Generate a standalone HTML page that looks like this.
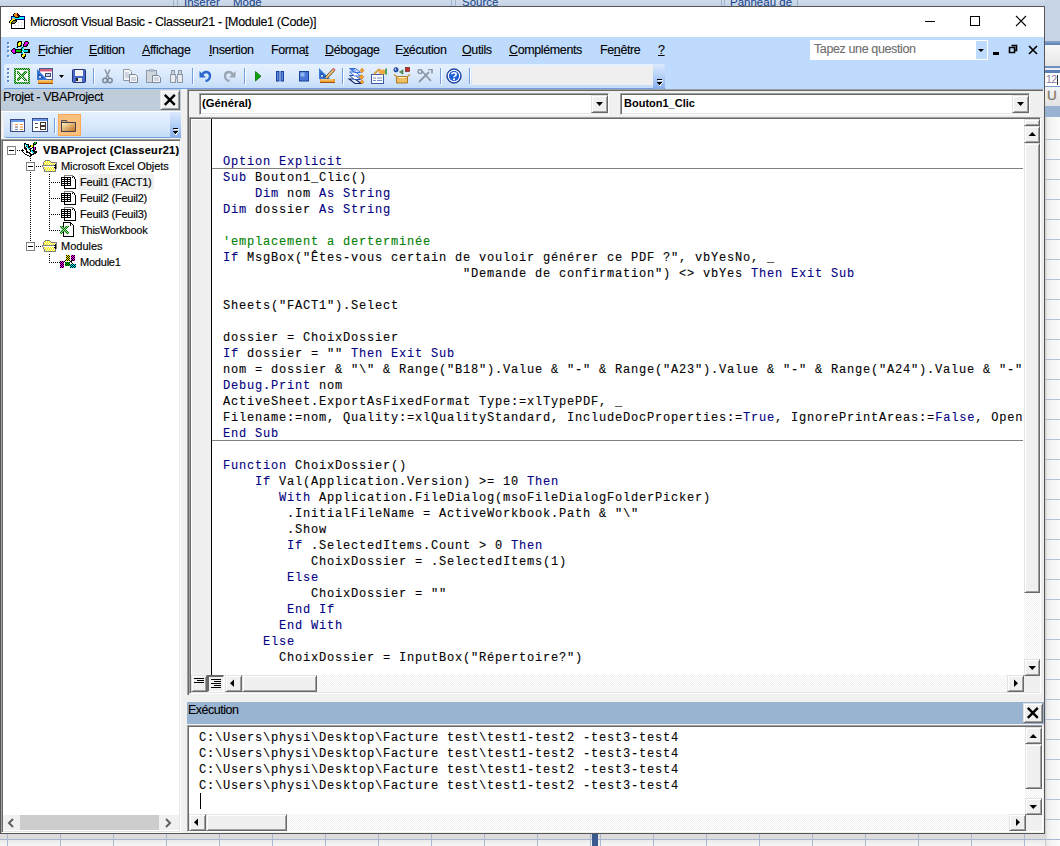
<!DOCTYPE html>
<html><head><meta charset="utf-8">
<style>
*{box-sizing:border-box}
html,body{margin:0;padding:0}
body{width:1060px;height:846px;position:relative;overflow:hidden;background:#dfe3e8;font-family:"Liberation Sans",sans-serif;font-size:12px;color:#000}
.a{position:absolute}
.mi{position:absolute;top:42px;font-size:12.5px;letter-spacing:-0.38px;color:#000;white-space:nowrap;line-height:16px;-webkit-text-stroke:0.1px #000}
.mi u{text-decoration:underline;text-underline-offset:1px}
.ui{position:absolute;font-size:12.5px;letter-spacing:-0.38px;white-space:nowrap;line-height:16px;-webkit-text-stroke:0.1px currentColor}
.code{position:absolute;font-family:"Liberation Mono",monospace;font-size:12px;letter-spacing:0.8px;-webkit-text-stroke:0.1px currentColor;white-space:pre;line-height:16px;color:#000}
.k{color:#00007f}
.c{color:#007f00}
.tree{position:absolute;font-size:11px;white-space:nowrap;line-height:16px;-webkit-text-stroke:0.15px #000}
.btn3d{position:absolute;background:#f0f0f0;border:1px solid;border-color:#e3e3e3 #696969 #696969 #e3e3e3;box-shadow:inset 1px 1px 0 #fff,inset -1px -1px 0 #a0a0a0}
.sunk{position:absolute;border:1px solid;border-color:#a0a0a0 #fff #fff #a0a0a0;box-shadow:inset 1px 1px 0 #696969,inset -1px -1px 0 #e3e3e3}
.sep{position:absolute;width:1px;background:#6f9ddd;border-right:1px solid #fff}
</style></head><body>
<!-- ===== background (Excel behind) ===== -->
<div class="a" style="left:0;top:0;width:1060px;height:6px;background:linear-gradient(#d0dceb,#c3d2e4)"></div>
<div class="a" style="left:173px;top:0;width:1px;height:6px;background:#9fb3cf"></div><div class="a" style="left:177px;top:0;width:1px;height:6px;background:#9fb3cf"></div>
<div class="a" style="left:451px;top:0;width:1px;height:6px;background:#9fb3cf"></div><div class="a" style="left:455px;top:0;width:1px;height:6px;background:#9fb3cf"></div>
<div class="a" style="left:721px;top:0;width:1px;height:6px;background:#9fb3cf"></div><div class="a" style="left:724px;top:0;width:1px;height:6px;background:#9fb3cf"></div><div class="a" style="left:797px;top:0;width:1px;height:6px;background:#9fb3cf"></div>
<div class="a" style="left:0;top:0;width:1060px;height:6px;overflow:hidden">
<div class="a" style="left:184px;top:-4px;font-size:11.5px;line-height:13px;color:#15428b;white-space:nowrap">Insérer</div>
<div class="a" style="left:233px;top:-4px;font-size:11.5px;line-height:13px;color:#15428b;white-space:nowrap">Mode</div>
<div class="a" style="left:462px;top:-4px;font-size:11.5px;line-height:13px;color:#15428b;white-space:nowrap">Source</div>
<div class="a" style="left:730px;top:-4px;font-size:11.5px;line-height:13px;color:#15428b;white-space:nowrap">Panneau de</div>
</div>
<!-- right strip -->
<div class="a" style="left:1045px;top:0;width:15px;height:846px;background:linear-gradient(90deg,#c8c8c8,#ececec 2px,#f4f4f4 6px,#fbfbfb)"></div>
<div class="a" style="left:1045px;top:0;width:15px;height:41px;background:#c6d4e5"></div>
<div class="a" style="left:1045px;top:41px;width:15px;height:4px;background:linear-gradient(#8aa6cc,#5a7fb4)"></div>
<div class="a" style="left:1045px;top:45px;width:15px;height:21px;background:linear-gradient(#f8f8f8,#e6e6e6)"></div>
<div class="a" style="left:1045px;top:66px;width:15px;height:2px;background:#6f90c0"></div>
<div class="a" style="left:1045px;top:68px;width:15px;height:2px;background:#e8eef6"></div>
<div class="a" style="left:1045px;top:70px;width:15px;height:3px;background:#5f80b4"></div>
<div class="a" style="left:1045px;top:73px;width:15px;height:13px;background:#fff"></div>
<div class="a" style="left:1046px;top:73px;font-size:10.5px;line-height:13px;color:#8a7a9a;white-space:nowrap;letter-spacing:-0.5px">12</div>
<div class="a" style="left:1057px;top:75px;width:1px;height:10px;background:#333"></div>
<div class="a" style="left:1045px;top:86px;width:15px;height:1px;background:#7a9ccc"></div>
<div class="a" style="left:1045px;top:87px;width:15px;height:19px;background:linear-gradient(#f4f4f4,#e2e2e2)"></div>
<div class="a" style="left:1047px;top:88px;font-size:13.5px;line-height:16px;color:#b08040;white-space:nowrap;-webkit-text-stroke:0.3px #3a6aa0">U</div>
<div class="a" style="left:1045px;top:106px;width:15px;height:11px;background:#9ab2d2"></div>
<div class="a" style="left:1045px;top:139px;width:15px;height:1px;background:#b4c2d8"></div><div class="a" style="left:1045px;top:159px;width:15px;height:1px;background:#b4c2d8"></div><div class="a" style="left:1045px;top:179px;width:15px;height:1px;background:#b4c2d8"></div><div class="a" style="left:1045px;top:199px;width:15px;height:1px;background:#b4c2d8"></div><div class="a" style="left:1045px;top:219px;width:15px;height:1px;background:#b4c2d8"></div><div class="a" style="left:1045px;top:239px;width:15px;height:1px;background:#b4c2d8"></div><div class="a" style="left:1045px;top:259px;width:15px;height:1px;background:#b4c2d8"></div><div class="a" style="left:1045px;top:279px;width:15px;height:1px;background:#b4c2d8"></div><div class="a" style="left:1045px;top:299px;width:15px;height:1px;background:#b4c2d8"></div><div class="a" style="left:1045px;top:319px;width:15px;height:1px;background:#b4c2d8"></div><div class="a" style="left:1045px;top:339px;width:15px;height:1px;background:#b4c2d8"></div><div class="a" style="left:1045px;top:359px;width:15px;height:1px;background:#b4c2d8"></div><div class="a" style="left:1045px;top:379px;width:15px;height:1px;background:#b4c2d8"></div><div class="a" style="left:1045px;top:399px;width:15px;height:1px;background:#b4c2d8"></div><div class="a" style="left:1045px;top:419px;width:15px;height:1px;background:#b4c2d8"></div><div class="a" style="left:1045px;top:439px;width:15px;height:1px;background:#b4c2d8"></div><div class="a" style="left:1045px;top:459px;width:15px;height:1px;background:#b4c2d8"></div><div class="a" style="left:1045px;top:479px;width:15px;height:1px;background:#b4c2d8"></div><div class="a" style="left:1045px;top:499px;width:15px;height:1px;background:#b4c2d8"></div><div class="a" style="left:1045px;top:519px;width:15px;height:1px;background:#b4c2d8"></div><div class="a" style="left:1045px;top:539px;width:15px;height:1px;background:#b4c2d8"></div><div class="a" style="left:1045px;top:559px;width:15px;height:1px;background:#b4c2d8"></div><div class="a" style="left:1045px;top:579px;width:15px;height:1px;background:#b4c2d8"></div><div class="a" style="left:1045px;top:599px;width:15px;height:1px;background:#b4c2d8"></div><div class="a" style="left:1045px;top:619px;width:15px;height:1px;background:#b4c2d8"></div><div class="a" style="left:1045px;top:639px;width:15px;height:1px;background:#b4c2d8"></div><div class="a" style="left:1045px;top:659px;width:15px;height:1px;background:#b4c2d8"></div><div class="a" style="left:1045px;top:679px;width:15px;height:1px;background:#b4c2d8"></div><div class="a" style="left:1045px;top:699px;width:15px;height:1px;background:#b4c2d8"></div><div class="a" style="left:1045px;top:719px;width:15px;height:1px;background:#b4c2d8"></div><div class="a" style="left:1045px;top:739px;width:15px;height:1px;background:#b4c2d8"></div><div class="a" style="left:1045px;top:759px;width:15px;height:1px;background:#b4c2d8"></div><div class="a" style="left:1045px;top:779px;width:15px;height:1px;background:#b4c2d8"></div><div class="a" style="left:1045px;top:799px;width:15px;height:1px;background:#b4c2d8"></div><div class="a" style="left:1045px;top:819px;width:15px;height:1px;background:#b4c2d8"></div><div class="a" style="left:1045px;top:839px;width:15px;height:1px;background:#b4c2d8"></div>
<!-- bottom strip -->
<div class="a" style="left:0;top:834px;width:1045px;height:5px;background:#dcdcdc"></div>
<div class="a" style="left:0;top:839px;width:1060px;height:1px;background:#a9b8cf"></div>
<div class="a" style="left:0;top:840px;width:1045px;height:6px;background:linear-gradient(#e9e9e9,#f6f6f6)"></div>
<div class="a" style="left:7px;top:834px;width:1px;height:12px;background:#a9b8cf"></div><div class="a" style="left:60px;top:834px;width:1px;height:12px;background:#a9b8cf"></div><div class="a" style="left:113px;top:834px;width:1px;height:12px;background:#a9b8cf"></div><div class="a" style="left:166px;top:834px;width:1px;height:12px;background:#a9b8cf"></div><div class="a" style="left:219px;top:834px;width:1px;height:12px;background:#a9b8cf"></div><div class="a" style="left:272px;top:834px;width:1px;height:12px;background:#a9b8cf"></div><div class="a" style="left:325px;top:834px;width:1px;height:12px;background:#a9b8cf"></div><div class="a" style="left:378px;top:834px;width:1px;height:12px;background:#a9b8cf"></div><div class="a" style="left:431px;top:834px;width:1px;height:12px;background:#a9b8cf"></div><div class="a" style="left:484px;top:834px;width:1px;height:12px;background:#a9b8cf"></div><div class="a" style="left:537px;top:834px;width:1px;height:12px;background:#a9b8cf"></div><div class="a" style="left:590px;top:834px;width:1px;height:12px;background:#a9b8cf"></div><div class="a" style="left:600px;top:834px;width:1px;height:12px;background:#a9b8cf"></div><div class="a" style="left:653px;top:834px;width:1px;height:12px;background:#a9b8cf"></div><div class="a" style="left:706px;top:834px;width:1px;height:12px;background:#a9b8cf"></div><div class="a" style="left:759px;top:834px;width:1px;height:12px;background:#a9b8cf"></div><div class="a" style="left:812px;top:834px;width:1px;height:12px;background:#a9b8cf"></div><div class="a" style="left:865px;top:834px;width:1px;height:12px;background:#a9b8cf"></div><div class="a" style="left:918px;top:834px;width:1px;height:12px;background:#a9b8cf"></div><div class="a" style="left:971px;top:834px;width:1px;height:12px;background:#a9b8cf"></div><div class="a" style="left:1024px;top:834px;width:1px;height:12px;background:#a9b8cf"></div>
<div class="a" style="left:592px;top:834px;width:6px;height:12px;background:#3a5a90"></div>
<!-- ===== window ===== -->
<div class="a" style="left:0;top:6px;width:1045px;height:828px;border:1px solid #555;background:#f0f0f0"></div>
<!-- title bar -->
<div class="a" style="left:1px;top:7px;width:1043px;height:30px;background:#fff"></div>
<div class="ui" style="left:30px;top:14px;letter-spacing:-0.33px">Microsoft Visual Basic - Classeur21 - [Module1 (Code)]</div>
<!-- min max close -->
<div class="a" style="left:925px;top:21px;width:10px;height:1px;background:#000"></div>
<div class="a" style="left:970px;top:16px;width:10px;height:10px;border:1px solid #000"></div>
<svg class="a" style="left:1015px;top:15px" width="12" height="12"><path d="M1 1L11 11M11 1L1 11" stroke="#000" stroke-width="1.1"/></svg>

<!-- menu + toolbar band -->
<div class="a" style="left:1px;top:37px;width:1043px;height:52px;background:#bedbfe"></div>
<div class="mi" style="left:38px"><u>F</u>ichier</div>
<div class="mi" style="left:89px"><u>E</u>dition</div>
<div class="mi" style="left:142px"><u>A</u>ffichage</div>
<div class="mi" style="left:209px"><u>I</u>nsertion</div>
<div class="mi" style="left:271px">Forma<u>t</u></div>
<div class="mi" style="left:325px"><u>D</u>ébogage</div>
<div class="mi" style="left:395px">E<u>x</u>écution</div>
<div class="mi" style="left:462px"><u>O</u>utils</div>
<div class="mi" style="left:509px"><u>C</u>ompléments</div>
<div class="mi" style="left:600px">Fe<u>n</u>être</div>
<div class="mi" style="left:658px"><u>?</u></div>

<!-- question box -->
<div class="a" style="left:810px;top:40px;width:178px;height:20px;background:#fff;border:1px solid #fff"></div>
<div class="a" style="left:976px;top:41px;width:11px;height:18px;background:#bedbfe"></div>
<div class="ui" style="left:814px;top:41px;color:#6d6d6d">Tapez une question</div>
<svg class="a" style="left:978px;top:49px" width="7" height="4"><path d="M0 0H6L3 3Z" fill="#000"/></svg>
<div class="a" style="left:993px;top:52px;width:6px;height:3px;background:#000"></div>
<svg class="a" style="left:1008px;top:44px" width="10" height="10"><path d="M3.5 1.5h5v5h-2M1.5 3.5h5v5h-5z" stroke="#000" stroke-width="1.6" fill="none"/></svg>
<svg class="a" style="left:1028px;top:45px" width="10" height="10"><path d="M1 1L9 9M9 1L1 9" stroke="#000" stroke-width="1.7"/></svg>

<!-- toolbar band -->
<div class="a" style="left:4px;top:64px;width:661px;height:25px;border-radius:3px 3px 0 0;background:linear-gradient(#e6f1fe,#d8e8fc 55%,#c4dcf8);border-bottom:1px solid #6d9ee0"></div>
<div class="a" style="left:472px;top:66px;width:181px;height:19px;background:#efefef"></div>
<div class="a" style="left:653px;top:64px;width:12px;height:25px;border-radius:0 3px 3px 0;background:linear-gradient(#dce9fd,#b4d0f8 50%,#86ace8)"></div>
<svg class="a" style="left:657px;top:79px" width="7" height="8" shape-rendering="crispEdges"><rect x="1" y="1" width="5" height="1" fill="#fff"/><rect x="5" y="3" width="1" height="1" fill="#fff"/><rect x="4" y="4" width="1" height="1" fill="#fff"/><rect x="3" y="5" width="1" height="1" fill="#fff"/><rect x="2" y="6" width="2" height="1" fill="#fff"/><rect x="0" y="0" width="5" height="1" fill="#000"/><rect x="0" y="3" width="5" height="1" fill="#000"/><rect x="1" y="4" width="3" height="1" fill="#000"/><rect x="2" y="5" width="1" height="1" fill="#000"/></svg>

<!-- ===== project panel ===== -->
<div class="a" style="left:1px;top:89px;width:180px;height:22px;background:#bfcddb"></div>
<div class="ui" style="left:3px;top:89px;letter-spacing:-0.4px">Projet - VBAProject</div>
<div class="btn3d" style="left:160px;top:90px;width:20px;height:20px"></div>
<svg class="a" style="left:163px;top:93px" width="14" height="13"><path d="M1.8 1.8L11.8 11.8M11.8 1.8L1.8 11.8" stroke="#000" stroke-width="2.4"/></svg>
<div class="a" style="left:1px;top:111px;width:180px;height:1px;background:#fff"></div>
<div class="a" style="left:4px;top:112px;width:177px;height:26px;border-radius:3px 0 0 3px;background:linear-gradient(#e6f1fe,#d8e8fc 55%,#c4dcf8);border-bottom:1px solid #6d9ee0"></div>
<div class="a" style="left:170px;top:112px;width:11px;height:26px;border-radius:0 0 3px 0;background:linear-gradient(#dce9fd,#b4d0f8 50%,#86ace8)"></div>
<svg class="a" style="left:173px;top:128px" width="7" height="8" shape-rendering="crispEdges"><rect x="1" y="1" width="5" height="1" fill="#fff"/><rect x="5" y="3" width="1" height="1" fill="#fff"/><rect x="4" y="4" width="1" height="1" fill="#fff"/><rect x="3" y="5" width="1" height="1" fill="#fff"/><rect x="2" y="6" width="2" height="1" fill="#fff"/><rect x="0" y="0" width="5" height="1" fill="#000"/><rect x="0" y="3" width="5" height="1" fill="#000"/><rect x="1" y="4" width="3" height="1" fill="#000"/><rect x="2" y="5" width="1" height="1" fill="#000"/></svg>
<div class="a" style="left:58px;top:114px;width:23px;height:22px;background:#fdbf7c;border:1px solid #f9a955"></div>

<!-- tree pane -->
<div class="sunk" style="left:1px;top:139px;width:180px;height:694px;background:#fff"></div>
<div class="a" style="left:3px;top:815px;width:176px;height:15px;background:#f0f0f0"></div>
<div class="a" style="left:20px;top:815px;width:139px;height:15px;background:#cdcdcd"></div>
<svg class="a" style="left:7px;top:818px" width="10" height="10"><path d="M6 1L2 5L6 9" stroke="#606060" stroke-width="2" fill="none"/></svg>
<svg class="a" style="left:163px;top:818px" width="10" height="10"><path d="M3 1L7 5L3 9" stroke="#606060" stroke-width="2" fill="none"/></svg>


<!-- tree content -->
<div class="a" style="left:79px;top:174px;width:75px;height:16px;background:#f0f0f0"></div>
<svg class="a" style="left:0;top:140px" width="180" height="140">
<g fill="#fff" stroke="#808080" stroke-width="1">
<rect x="7.5" y="6.5" width="8" height="8"/>
<rect x="26.5" y="22.5" width="8" height="8"/>
<rect x="26.5" y="102.5" width="8" height="8"/>
</g>
<g stroke="#000" stroke-width="1">
<path d="M9 10.5h5M28 26.5h5M28 106.5h5"/>
</g>
<g stroke="#000" stroke-width="1" stroke-dasharray="1 1">
<path d="M17 10.5h5M36 26.5h5M36 106.5h5"/>
<path d="M30.5 18v4M30.5 32v70"/>
<path d="M49.5 34v58M49.5 114v9"/>
<path d="M51 42.5h9M51 58.5h9M51 74.5h9M51 90.5h9M51 122.5h9"/>
</g>
</svg>
<div class="tree" style="left:43px;top:142px;font-weight:bold;width:136px;overflow:hidden;letter-spacing:0.3px">VBAProject (Classeur21)</div>
<div class="tree" style="left:61px;top:158px;letter-spacing:-0.08px">Microsoft Excel Objets</div>
<div class="tree" style="left:81px;top:174px;left:80px;letter-spacing:-0.22px">Feuil1 (FACT1)</div>
<div class="tree" style="left:81px;top:190px;left:80px;letter-spacing:-0.22px">Feuil2 (Feuil2)</div>
<div class="tree" style="left:81px;top:206px;left:80px;letter-spacing:-0.22px">Feuil3 (Feuil3)</div>
<div class="tree" style="left:81px;top:222px;left:80px;letter-spacing:-0.22px">ThisWorkbook</div>
<div class="tree" style="left:61px;top:238px">Modules</div>
<div class="tree" style="left:81px;top:254px;left:80px;letter-spacing:-0.22px">Module1</div>
<!-- ===== code window ===== -->
<div class="a" style="left:187px;top:89px;width:856px;height:606px;border-style:solid;border-width:1px 0 0 1px;border-color:#a0a0a0;box-shadow:inset 1px 1px 0 #696969"></div>
<!-- combos -->
<div class="sunk" style="left:199px;top:93px;width:410px;height:22px;background:#fff"></div>
<div class="btn3d" style="left:591px;top:95px;width:17px;height:18px"></div>
<svg class="a" style="left:596px;top:102px" width="8" height="5"><path d="M0 0H7L3.5 4Z" fill="#000"/></svg>
<div class="a" style="left:202px;top:96px;font-size:11.3px;font-weight:bold;white-space:nowrap;line-height:14px">(Général)</div>
<div class="sunk" style="left:620px;top:93px;width:410px;height:22px;background:#fff"></div>
<div class="btn3d" style="left:1012px;top:95px;width:17px;height:18px"></div>
<svg class="a" style="left:1017px;top:102px" width="8" height="5"><path d="M0 0H7L3.5 4Z" fill="#000"/></svg>
<div class="a" style="left:624px;top:96px;font-size:11px;font-weight:bold;white-space:nowrap;line-height:14px">Bouton1_Clic</div>

<!-- code pane -->
<div class="sunk" style="left:189px;top:117px;width:852px;height:577px;background:#fff"></div>
<div class="a" style="left:191px;top:119px;width:20px;height:556px;background:#f0f0f0;border-left:1px solid #fff;border-top:1px solid #fff"></div>
<div class="a" style="left:211px;top:119px;width:1px;height:556px;background:#000"></div>
<div class="a" style="left:212px;top:168px;width:811px;height:1px;background:#808080"></div>
<div class="a" style="left:212px;top:440px;width:811px;height:1px;background:#808080"></div>

<!-- code text -->
<div class="a" style="left:212px;top:119px;width:811px;height:556px;overflow:hidden"><div class="code" style="left:11px;top:3px">

<span class="k">Option Explicit</span>
<span class="k">Sub</span> Bouton1_Clic()
    <span class="k">Dim</span> nom <span class="k">As String</span>
<span class="k">Dim</span> dossier <span class="k">As String</span>

<span class="c">'emplacement a derterminée</span>
<span class="k">If</span> MsgBox("Êtes-vous certain de vouloir générer ce PDF ?", vbYesNo, _
                              "Demande de confirmation") &lt;&gt; vbYes <span class="k">Then Exit Sub</span>

Sheets("FACT1").Select

dossier = ChoixDossier
<span class="k">If</span> dossier = "" <span class="k">Then Exit Sub</span>
nom = dossier &amp; "\" &amp; Range("B18").Value &amp; "-" &amp; Range("A23").Value &amp; "-" &amp; Range("A24").Value &amp; "-" &amp; Range("A25").Value
<span class="k">Debug.Print</span> nom
ActiveSheet.ExportAsFixedFormat Type:=xlTypePDF, _
Filename:=nom, Quality:=xlQualityStandard, IncludeDocProperties:=<span class="k">True</span>, IgnorePrintAreas:=<span class="k">False</span>, OpenAfterPublish:=<span class="k">True</span>
<span class="k">End Sub</span>

<span class="k">Function</span> ChoixDossier()
    <span class="k">If</span> Val(Application.Version) &gt;= 10 <span class="k">Then</span>
       <span class="k">With</span> Application.FileDialog(msoFileDialogFolderPicker)
        .InitialFileName = ActiveWorkbook.Path &amp; "\"
        .Show
        <span class="k">If</span> .SelectedItems.Count &gt; 0 <span class="k">Then</span>
           ChoixDossier = .SelectedItems(1)
        <span class="k">Else</span>
           ChoixDossier = ""
        <span class="k">End If</span>
       <span class="k">End With</span>
     <span class="k">Else</span>
       ChoixDossier = InputBox("Répertoire?")</div></div>
<!-- vscroll -->
<div class="a" style="left:1024px;top:119px;width:16px;height:556px;background:repeating-conic-gradient(#f0f0f0 0 25%,#fff 0 50%) 0 0/2px 2px"></div>
<div class="btn3d" style="left:1024px;top:119px;width:16px;height:7px"></div>
<div class="btn3d" style="left:1024px;top:126px;width:16px;height:17px"></div>
<svg class="a" style="left:1028px;top:131px" width="9" height="6"><path d="M0.5 5H8L4.25 1Z" fill="#000"/></svg>
<div class="btn3d" style="left:1024px;top:143px;width:16px;height:450px"></div>
<div class="btn3d" style="left:1024px;top:659px;width:16px;height:17px"></div>
<svg class="a" style="left:1028px;top:665px" width="9" height="6"><path d="M0.5 1H8L4.25 5Z" fill="#000"/></svg>
<!-- hscroll -->
<div class="a" style="left:191px;top:675px;width:832px;height:17px;background:repeating-conic-gradient(#f0f0f0 0 25%,#fff 0 50%) 0 0/2px 2px"></div>
<div class="btn3d" style="left:191px;top:675px;width:16px;height:17px"></div>
<div class="a" style="left:207px;top:675px;width:17px;height:17px;background:#f0f0f0;border-style:solid;border-width:2px 1px 1px 2px;border-color:#696969 #fff #fff #696969"></div>
<svg class="a" style="left:193px;top:677px" width="13" height="13" shape-rendering="crispEdges"><path d="M1 1.5h10M4 3.5h7M1 5.5h10" stroke="#000" stroke-width="1"/></svg>
<svg class="a" style="left:210px;top:678px" width="13" height="12" shape-rendering="crispEdges"><path d="M1 1.5h10M4 3.5h7M1 5.5h10M4 7.5h7M1 9.5h10" stroke="#000" stroke-width="1"/></svg>
<div class="btn3d" style="left:225px;top:675px;width:17px;height:17px"></div>
<svg class="a" style="left:229px;top:679px" width="6" height="9"><path d="M5 0.5V8L1 4.25Z" fill="#000"/></svg>
<div class="btn3d" style="left:242px;top:675px;width:75px;height:17px"></div>
<div class="btn3d" style="left:1007px;top:675px;width:17px;height:17px"></div>
<svg class="a" style="left:1013px;top:679px" width="6" height="9"><path d="M1 0.5V8L5 4.25Z" fill="#000"/></svg>
<div class="a" style="left:1024px;top:676px;width:16px;height:16px;background:#f0f0f0"></div>

<!-- ===== immediate window ===== -->
<div class="a" style="left:187px;top:702px;width:857px;height:22px;background:#99b4d1"></div>
<div class="ui" style="left:188px;top:702px;letter-spacing:-0.5px">Exécution</div>
<div class="btn3d" style="left:1023px;top:703px;width:20px;height:20px"></div>
<svg class="a" style="left:1026px;top:706px" width="14" height="13"><path d="M1.8 1.8L11.8 11.8M11.8 1.8L1.8 11.8" stroke="#000" stroke-width="2.4"/></svg>
<div class="sunk" style="left:187px;top:725px;width:856px;height:107px;background:#fff"></div>
<div class="a" style="left:1025px;top:727px;width:17px;height:88px;background:repeating-conic-gradient(#f0f0f0 0 25%,#fff 0 50%) 0 0/2px 2px"></div>
<div class="btn3d" style="left:1025px;top:727px;width:17px;height:17px"></div>
<svg class="a" style="left:1029px;top:733px" width="9" height="6"><path d="M0.5 5H8L4.25 1Z" fill="#000"/></svg>
<div class="btn3d" style="left:1025px;top:744px;width:17px;height:45px"></div>
<div class="btn3d" style="left:1025px;top:798px;width:17px;height:17px"></div>
<svg class="a" style="left:1029px;top:804px" width="9" height="6"><path d="M0.5 1H8L4.25 5Z" fill="#000"/></svg>
<div class="a" style="left:189px;top:814px;width:836px;height:17px;background:repeating-conic-gradient(#f0f0f0 0 25%,#fff 0 50%) 0 0/2px 2px"></div>
<div class="btn3d" style="left:189px;top:814px;width:17px;height:17px"></div>
<svg class="a" style="left:193px;top:818px" width="6" height="9"><path d="M5 0.5V8L1 4.25Z" fill="#000"/></svg>
<div class="btn3d" style="left:206px;top:814px;width:81px;height:17px"></div>
<div class="btn3d" style="left:1009px;top:814px;width:17px;height:17px"></div>
<svg class="a" style="left:1015px;top:818px" width="6" height="9"><path d="M1 0.5V8L5 4.25Z" fill="#000"/></svg>
<div class="a" style="left:1026px;top:815px;width:16px;height:16px;background:#f0f0f0"></div>
<div class="code" style="left:199px;top:730px">C:\Users\physi\Desktop\Facture test\test1-test2 -test3-test4
C:\Users\physi\Desktop\Facture test\test1-test2 -test3-test4
C:\Users\physi\Desktop\Facture test\test1-test2 -test3-test4
C:\Users\physi\Desktop\Facture test\test1-test2 -test3-test4</div>
<div class="a" style="left:200px;top:793px;width:1px;height:16px;background:#000"></div>

<!-- ICONS -->
<svg class="a" style="left:8px;top:11px" width="20" height="18" shape-rendering="crispEdges"><rect x="6" y="2" width="1" height="1" fill="#000"/><rect x="7" y="2" width="2" height="1" fill="#e88a10"/><rect x="9" y="2" width="1" height="1" fill="#000"/><rect x="5" y="3" width="1" height="1" fill="#000"/><rect x="6" y="3" width="3" height="1" fill="#e88a10"/><rect x="9" y="3" width="1" height="1" fill="#800000"/><rect x="10" y="3" width="1" height="1" fill="#000"/><rect x="5" y="4" width="1" height="1" fill="#000"/><rect x="6" y="4" width="3" height="1" fill="#e88a10"/><rect x="9" y="4" width="2" height="1" fill="#800000"/><rect x="11" y="4" width="1" height="1" fill="#000"/><rect x="3" y="5" width="3" height="1" fill="#000080"/><rect x="6" y="5" width="1" height="1" fill="#000"/><rect x="7" y="5" width="3" height="1" fill="#e88a10"/><rect x="10" y="5" width="2" height="1" fill="#000"/><rect x="12" y="5" width="5" height="1" fill="#000080"/><rect x="3" y="6" width="1" height="1" fill="#000080"/><rect x="4" y="6" width="3" height="1" fill="#00ffff"/><rect x="7" y="6" width="4" height="1" fill="#000"/><rect x="11" y="6" width="5" height="1" fill="#00ffff"/><rect x="16" y="6" width="1" height="1" fill="#000080"/><rect x="3" y="7" width="1" height="1" fill="#000080"/><rect x="4" y="7" width="3" height="1" fill="#c0a0b0"/><rect x="7" y="7" width="9" height="1" fill="#00ffff"/><rect x="16" y="7" width="1" height="1" fill="#000080"/><rect x="3" y="8" width="1" height="1" fill="#000080"/><rect x="4" y="8" width="3" height="1" fill="#ffff00"/><rect x="7" y="8" width="1" height="1" fill="#000"/><rect x="8" y="8" width="9" height="1" fill="#000080"/><rect x="2" y="9" width="1" height="1" fill="#000"/><rect x="3" y="9" width="2" height="1" fill="#ffff00"/><rect x="5" y="9" width="4" height="1" fill="#000"/><rect x="9" y="9" width="7" height="1" fill="#fff"/><rect x="16" y="9" width="1" height="1" fill="#000"/><rect x="1" y="10" width="1" height="1" fill="#000"/><rect x="2" y="10" width="2" height="1" fill="#ffff00"/><rect x="4" y="10" width="1" height="1" fill="#000"/><rect x="5" y="10" width="3" height="1" fill="#808040"/><rect x="8" y="10" width="1" height="1" fill="#000"/><rect x="9" y="10" width="7" height="1" fill="#fff"/><rect x="16" y="10" width="1" height="1" fill="#000"/><rect x="1" y="11" width="1" height="1" fill="#000"/><rect x="2" y="11" width="1" height="1" fill="#ffff00"/><rect x="3" y="11" width="1" height="1" fill="#000"/><rect x="4" y="11" width="3" height="1" fill="#808040"/><rect x="7" y="11" width="1" height="1" fill="#000"/><rect x="8" y="11" width="2" height="1" fill="#fff"/><rect x="10" y="11" width="1" height="1" fill="#c8c8c8"/><rect x="11" y="11" width="2" height="1" fill="#fff"/><rect x="13" y="11" width="1" height="1" fill="#c8c8c8"/><rect x="14" y="11" width="2" height="1" fill="#fff"/><rect x="16" y="11" width="1" height="1" fill="#000"/><rect x="2" y="12" width="1" height="1" fill="#ffff00"/><rect x="3" y="12" width="4" height="1" fill="#000"/><rect x="7" y="12" width="9" height="1" fill="#fff"/><rect x="16" y="12" width="1" height="1" fill="#000"/><rect x="3" y="13" width="1" height="1" fill="#000"/><rect x="4" y="13" width="12" height="1" fill="#fff"/><rect x="16" y="13" width="1" height="1" fill="#000"/><rect x="3" y="14" width="1" height="1" fill="#000"/><rect x="4" y="14" width="3" height="1" fill="#fff"/><rect x="7" y="14" width="1" height="1" fill="#c8c8c8"/><rect x="8" y="14" width="2" height="1" fill="#fff"/><rect x="10" y="14" width="1" height="1" fill="#c8c8c8"/><rect x="11" y="14" width="2" height="1" fill="#fff"/><rect x="13" y="14" width="1" height="1" fill="#c8c8c8"/><rect x="14" y="14" width="2" height="1" fill="#fff"/><rect x="16" y="14" width="1" height="1" fill="#000"/><rect x="3" y="15" width="1" height="1" fill="#000"/><rect x="4" y="15" width="12" height="1" fill="#fff"/><rect x="16" y="15" width="1" height="1" fill="#000"/><rect x="3" y="16" width="1" height="1" fill="#000"/><rect x="4" y="16" width="12" height="1" fill="#fff"/><rect x="16" y="16" width="1" height="1" fill="#000"/><rect x="3" y="17" width="14" height="1" fill="#000"/></svg>
<svg class="a" style="left:2px;top:39px" width="30" height="20" shape-rendering="crispEdges"><rect x="16" y="2" width="4" height="1" fill="#000"/><rect x="23" y="2" width="3" height="1" fill="#000"/><rect x="5" y="3" width="2" height="1" fill="#5a8ad0"/><rect x="15" y="3" width="2" height="1" fill="#000"/><rect x="17" y="3" width="2" height="1" fill="#ffff00"/><rect x="19" y="3" width="1" height="1" fill="#000"/><rect x="22" y="3" width="1" height="1" fill="#000"/><rect x="23" y="3" width="3" height="1" fill="#e000e0"/><rect x="26" y="3" width="1" height="1" fill="#000"/><rect x="5" y="4" width="2" height="1" fill="#5a8ad0"/><rect x="7" y="4" width="1" height="1" fill="#f4f8ff"/><rect x="15" y="4" width="1" height="1" fill="#000"/><rect x="16" y="4" width="3" height="1" fill="#ffff00"/><rect x="19" y="4" width="1" height="1" fill="#000"/><rect x="22" y="4" width="1" height="1" fill="#000"/><rect x="23" y="4" width="3" height="1" fill="#e000e0"/><rect x="26" y="4" width="1" height="1" fill="#000"/><rect x="6" y="5" width="2" height="1" fill="#f4f8ff"/><rect x="15" y="5" width="1" height="1" fill="#000"/><rect x="16" y="5" width="3" height="1" fill="#ffff00"/><rect x="19" y="5" width="1" height="1" fill="#000"/><rect x="21" y="5" width="1" height="1" fill="#000"/><rect x="22" y="5" width="3" height="1" fill="#e000e0"/><rect x="25" y="5" width="1" height="1" fill="#000"/><rect x="15" y="6" width="1" height="1" fill="#000"/><rect x="16" y="6" width="2" height="1" fill="#ffff00"/><rect x="18" y="6" width="2" height="1" fill="#000"/><rect x="21" y="6" width="1" height="1" fill="#000"/><rect x="22" y="6" width="2" height="1" fill="#e000e0"/><rect x="24" y="6" width="2" height="1" fill="#000"/><rect x="5" y="7" width="2" height="1" fill="#5a8ad0"/><rect x="15" y="7" width="4" height="1" fill="#000"/><rect x="19" y="7" width="1" height="1" fill="#00e0e0"/><rect x="21" y="7" width="4" height="1" fill="#000"/><rect x="5" y="8" width="2" height="1" fill="#5a8ad0"/><rect x="7" y="8" width="1" height="1" fill="#f4f8ff"/><rect x="14" y="8" width="1" height="1" fill="#00e0e0"/><rect x="15" y="8" width="1" height="1" fill="#000"/><rect x="19" y="8" width="1" height="1" fill="#00e0e0"/><rect x="20" y="8" width="1" height="1" fill="#000"/><rect x="21" y="8" width="1" height="1" fill="#00e0e0"/><rect x="6" y="9" width="2" height="1" fill="#f4f8ff"/><rect x="11" y="9" width="2" height="1" fill="#000"/><rect x="13" y="9" width="1" height="1" fill="#00e0e0"/><rect x="19" y="9" width="1" height="1" fill="#000"/><rect x="20" y="9" width="2" height="1" fill="#00e0e0"/><rect x="10" y="10" width="1" height="1" fill="#000"/><rect x="11" y="10" width="2" height="1" fill="#e000e0"/><rect x="13" y="10" width="7" height="1" fill="#000"/><rect x="20" y="10" width="1" height="1" fill="#00e0e0"/><rect x="21" y="10" width="1" height="1" fill="#e8f0ff"/><rect x="22" y="10" width="6" height="1" fill="#000"/><rect x="5" y="11" width="2" height="1" fill="#5a8ad0"/><rect x="9" y="11" width="1" height="1" fill="#000"/><rect x="10" y="11" width="3" height="1" fill="#e000e0"/><rect x="13" y="11" width="1" height="1" fill="#000"/><rect x="14" y="11" width="5" height="1" fill="#00c000"/><rect x="19" y="11" width="1" height="1" fill="#000"/><rect x="20" y="11" width="6" height="1" fill="#00e0e0"/><rect x="26" y="11" width="2" height="1" fill="#000"/><rect x="5" y="12" width="2" height="1" fill="#5a8ad0"/><rect x="7" y="12" width="1" height="1" fill="#f4f8ff"/><rect x="9" y="12" width="1" height="1" fill="#000"/><rect x="10" y="12" width="3" height="1" fill="#e000e0"/><rect x="13" y="12" width="1" height="1" fill="#000"/><rect x="14" y="12" width="5" height="1" fill="#00c000"/><rect x="19" y="12" width="1" height="1" fill="#000"/><rect x="20" y="12" width="1" height="1" fill="#e8f0ff"/><rect x="21" y="12" width="5" height="1" fill="#00e0e0"/><rect x="26" y="12" width="2" height="1" fill="#000"/><rect x="6" y="13" width="2" height="1" fill="#f4f8ff"/><rect x="10" y="13" width="1" height="1" fill="#000"/><rect x="11" y="13" width="2" height="1" fill="#e000e0"/><rect x="13" y="13" width="7" height="1" fill="#000"/><rect x="20" y="13" width="1" height="1" fill="#00e0e0"/><rect x="21" y="13" width="1" height="1" fill="#e8f0ff"/><rect x="22" y="13" width="6" height="1" fill="#000"/><rect x="11" y="14" width="3" height="1" fill="#000"/><rect x="19" y="14" width="2" height="1" fill="#00e0e0"/><rect x="19" y="15" width="2" height="1" fill="#000"/><rect x="21" y="15" width="2" height="1" fill="#ffff00"/><rect x="23" y="15" width="1" height="1" fill="#000"/><rect x="5" y="16" width="2" height="1" fill="#5a8ad0"/><rect x="19" y="16" width="1" height="1" fill="#000"/><rect x="20" y="16" width="3" height="1" fill="#ffff00"/><rect x="23" y="16" width="1" height="1" fill="#000"/><rect x="5" y="17" width="2" height="1" fill="#5a8ad0"/><rect x="7" y="17" width="1" height="1" fill="#f4f8ff"/><rect x="19" y="17" width="1" height="1" fill="#000"/><rect x="20" y="17" width="2" height="1" fill="#ffff00"/><rect x="22" y="17" width="2" height="1" fill="#000"/><rect x="6" y="18" width="2" height="1" fill="#f4f8ff"/><rect x="20" y="18" width="3" height="1" fill="#000"/><rect x="21" y="19" width="2" height="1" fill="#000"/></svg>
<svg class="a" style="left:6px;top:67px" width="4" height="18"><rect x="1" y="1" width="2" height="2" fill="#5a8ad0"/><rect x="2" y="2" width="2" height="2" fill="#fff" opacity=".8"/><rect x="1" y="1" width="2" height="2" fill="#5a8ad0"/><rect x="1" y="5" width="2" height="2" fill="#5a8ad0"/><rect x="2" y="6" width="2" height="2" fill="#fff" opacity=".8"/><rect x="1" y="5" width="2" height="2" fill="#5a8ad0"/><rect x="1" y="9" width="2" height="2" fill="#5a8ad0"/><rect x="2" y="10" width="2" height="2" fill="#fff" opacity=".8"/><rect x="1" y="9" width="2" height="2" fill="#5a8ad0"/><rect x="1" y="13" width="2" height="2" fill="#5a8ad0"/><rect x="2" y="14" width="2" height="2" fill="#fff" opacity=".8"/><rect x="1" y="13" width="2" height="2" fill="#5a8ad0"/></svg>
<svg class="a" style="left:14px;top:68px" width="16" height="16"><g shape-rendering="crispEdges"><rect x="0" y="0" width="1" height="1" fill="#008000"/><rect x="1" y="0" width="1" height="1" fill="#8cc08c"/><rect x="2" y="0" width="1" height="1" fill="#008000"/><rect x="3" y="0" width="1" height="1" fill="#8cc08c"/><rect x="4" y="0" width="1" height="1" fill="#008000"/><rect x="5" y="0" width="1" height="1" fill="#8cc08c"/><rect x="6" y="0" width="1" height="1" fill="#008000"/><rect x="7" y="0" width="1" height="1" fill="#8cc08c"/><rect x="8" y="0" width="1" height="1" fill="#008000"/><rect x="9" y="0" width="1" height="1" fill="#8cc08c"/><rect x="10" y="0" width="1" height="1" fill="#008000"/><rect x="11" y="0" width="1" height="1" fill="#8cc08c"/><rect x="12" y="0" width="1" height="1" fill="#008000"/><rect x="13" y="0" width="1" height="1" fill="#8cc08c"/><rect x="14" y="0" width="1" height="1" fill="#008000"/><rect x="15" y="0" width="1" height="1" fill="#8cc08c"/><rect x="0" y="1" width="1" height="1" fill="#8cc08c"/><rect x="1" y="1" width="1" height="1" fill="#008000"/><rect x="2" y="1" width="1" height="1" fill="#8cc08c"/><rect x="3" y="1" width="1" height="1" fill="#008000"/><rect x="4" y="1" width="1" height="1" fill="#8cc08c"/><rect x="5" y="1" width="1" height="1" fill="#008000"/><rect x="6" y="1" width="1" height="1" fill="#8cc08c"/><rect x="7" y="1" width="1" height="1" fill="#008000"/><rect x="8" y="1" width="1" height="1" fill="#8cc08c"/><rect x="9" y="1" width="1" height="1" fill="#008000"/><rect x="10" y="1" width="1" height="1" fill="#8cc08c"/><rect x="11" y="1" width="1" height="1" fill="#008000"/><rect x="12" y="1" width="1" height="1" fill="#8cc08c"/><rect x="13" y="1" width="1" height="1" fill="#008000"/><rect x="14" y="1" width="1" height="1" fill="#8cc08c"/><rect x="15" y="1" width="1" height="1" fill="#008000"/><rect x="0" y="2" width="1" height="1" fill="#008000"/><rect x="1" y="2" width="1" height="1" fill="#8cc08c"/><rect x="2" y="2" width="1" height="1" fill="#fff"/><rect x="3" y="2" width="1" height="1" fill="#fff"/><rect x="4" y="2" width="1" height="1" fill="#fff"/><rect x="5" y="2" width="1" height="1" fill="#fff"/><rect x="6" y="2" width="1" height="1" fill="#fff"/><rect x="7" y="2" width="1" height="1" fill="#fff"/><rect x="8" y="2" width="1" height="1" fill="#fff"/><rect x="9" y="2" width="1" height="1" fill="#fff"/><rect x="10" y="2" width="1" height="1" fill="#fff"/><rect x="11" y="2" width="1" height="1" fill="#fff"/><rect x="12" y="2" width="1" height="1" fill="#fff"/><rect x="13" y="2" width="1" height="1" fill="#fff"/><rect x="14" y="2" width="1" height="1" fill="#008000"/><rect x="15" y="2" width="1" height="1" fill="#8cc08c"/><rect x="0" y="3" width="1" height="1" fill="#8cc08c"/><rect x="1" y="3" width="1" height="1" fill="#008000"/><rect x="2" y="3" width="1" height="1" fill="#fff"/><rect x="3" y="3" width="1" height="1" fill="#008000"/><rect x="4" y="3" width="1" height="1" fill="#8cc08c"/><rect x="5" y="3" width="1" height="1" fill="#fff"/><rect x="6" y="3" width="1" height="1" fill="#fff"/><rect x="7" y="3" width="1" height="1" fill="#fff"/><rect x="8" y="3" width="1" height="1" fill="#fff"/><rect x="9" y="3" width="1" height="1" fill="#fff"/><rect x="10" y="3" width="1" height="1" fill="#8cc08c"/><rect x="11" y="3" width="1" height="1" fill="#008000"/><rect x="12" y="3" width="1" height="1" fill="#8cc08c"/><rect x="13" y="3" width="1" height="1" fill="#fff"/><rect x="14" y="3" width="1" height="1" fill="#8cc08c"/><rect x="15" y="3" width="1" height="1" fill="#008000"/><rect x="0" y="4" width="1" height="1" fill="#008000"/><rect x="1" y="4" width="1" height="1" fill="#8cc08c"/><rect x="2" y="4" width="1" height="1" fill="#fff"/><rect x="3" y="4" width="1" height="1" fill="#8cc08c"/><rect x="4" y="4" width="1" height="1" fill="#008000"/><rect x="5" y="4" width="1" height="1" fill="#8cc08c"/><rect x="6" y="4" width="1" height="1" fill="#fff"/><rect x="7" y="4" width="1" height="1" fill="#fff"/><rect x="8" y="4" width="1" height="1" fill="#fff"/><rect x="9" y="4" width="1" height="1" fill="#8cc08c"/><rect x="10" y="4" width="1" height="1" fill="#008000"/><rect x="11" y="4" width="1" height="1" fill="#8cc08c"/><rect x="12" y="4" width="1" height="1" fill="#008000"/><rect x="13" y="4" width="1" height="1" fill="#fff"/><rect x="14" y="4" width="1" height="1" fill="#008000"/><rect x="15" y="4" width="1" height="1" fill="#8cc08c"/><rect x="0" y="5" width="1" height="1" fill="#8cc08c"/><rect x="1" y="5" width="1" height="1" fill="#008000"/><rect x="2" y="5" width="1" height="1" fill="#fff"/><rect x="3" y="5" width="1" height="1" fill="#008000"/><rect x="4" y="5" width="1" height="1" fill="#fff"/><rect x="5" y="5" width="1" height="1" fill="#008000"/><rect x="6" y="5" width="1" height="1" fill="#8cc08c"/><rect x="7" y="5" width="1" height="1" fill="#fff"/><rect x="8" y="5" width="1" height="1" fill="#8cc08c"/><rect x="9" y="5" width="1" height="1" fill="#008000"/><rect x="10" y="5" width="1" height="1" fill="#8cc08c"/><rect x="11" y="5" width="1" height="1" fill="#008000"/><rect x="12" y="5" width="1" height="1" fill="#fff"/><rect x="13" y="5" width="1" height="1" fill="#fff"/><rect x="14" y="5" width="1" height="1" fill="#8cc08c"/><rect x="15" y="5" width="1" height="1" fill="#008000"/><rect x="0" y="6" width="1" height="1" fill="#008000"/><rect x="1" y="6" width="1" height="1" fill="#8cc08c"/><rect x="2" y="6" width="1" height="1" fill="#fff"/><rect x="3" y="6" width="1" height="1" fill="#fff"/><rect x="4" y="6" width="1" height="1" fill="#008000"/><rect x="5" y="6" width="1" height="1" fill="#fff"/><rect x="6" y="6" width="1" height="1" fill="#008000"/><rect x="7" y="6" width="1" height="1" fill="#8cc08c"/><rect x="8" y="6" width="1" height="1" fill="#008000"/><rect x="9" y="6" width="1" height="1" fill="#8cc08c"/><rect x="10" y="6" width="1" height="1" fill="#008000"/><rect x="11" y="6" width="1" height="1" fill="#fff"/><rect x="12" y="6" width="1" height="1" fill="#fff"/><rect x="13" y="6" width="1" height="1" fill="#fff"/><rect x="14" y="6" width="1" height="1" fill="#008000"/><rect x="15" y="6" width="1" height="1" fill="#8cc08c"/><rect x="0" y="7" width="1" height="1" fill="#8cc08c"/><rect x="1" y="7" width="1" height="1" fill="#008000"/><rect x="2" y="7" width="1" height="1" fill="#fff"/><rect x="3" y="7" width="1" height="1" fill="#fff"/><rect x="4" y="7" width="1" height="1" fill="#fff"/><rect x="5" y="7" width="1" height="1" fill="#008000"/><rect x="6" y="7" width="1" height="1" fill="#fff"/><rect x="7" y="7" width="1" height="1" fill="#008000"/><rect x="8" y="7" width="1" height="1" fill="#8cc08c"/><rect x="9" y="7" width="1" height="1" fill="#008000"/><rect x="10" y="7" width="1" height="1" fill="#fff"/><rect x="11" y="7" width="1" height="1" fill="#fff"/><rect x="12" y="7" width="1" height="1" fill="#fff"/><rect x="13" y="7" width="1" height="1" fill="#fff"/><rect x="14" y="7" width="1" height="1" fill="#8cc08c"/><rect x="15" y="7" width="1" height="1" fill="#008000"/><rect x="0" y="8" width="1" height="1" fill="#008000"/><rect x="1" y="8" width="1" height="1" fill="#8cc08c"/><rect x="2" y="8" width="1" height="1" fill="#fff"/><rect x="3" y="8" width="1" height="1" fill="#fff"/><rect x="4" y="8" width="1" height="1" fill="#fff"/><rect x="5" y="8" width="1" height="1" fill="#8cc08c"/><rect x="6" y="8" width="1" height="1" fill="#008000"/><rect x="7" y="8" width="1" height="1" fill="#fff"/><rect x="8" y="8" width="1" height="1" fill="#008000"/><rect x="9" y="8" width="1" height="1" fill="#8cc08c"/><rect x="10" y="8" width="1" height="1" fill="#fff"/><rect x="11" y="8" width="1" height="1" fill="#fff"/><rect x="12" y="8" width="1" height="1" fill="#fff"/><rect x="13" y="8" width="1" height="1" fill="#fff"/><rect x="14" y="8" width="1" height="1" fill="#008000"/><rect x="15" y="8" width="1" height="1" fill="#8cc08c"/><rect x="0" y="9" width="1" height="1" fill="#8cc08c"/><rect x="1" y="9" width="1" height="1" fill="#008000"/><rect x="2" y="9" width="1" height="1" fill="#fff"/><rect x="3" y="9" width="1" height="1" fill="#fff"/><rect x="4" y="9" width="1" height="1" fill="#8cc08c"/><rect x="5" y="9" width="1" height="1" fill="#008000"/><rect x="6" y="9" width="1" height="1" fill="#8cc08c"/><rect x="7" y="9" width="1" height="1" fill="#008000"/><rect x="8" y="9" width="1" height="1" fill="#fff"/><rect x="9" y="9" width="1" height="1" fill="#008000"/><rect x="10" y="9" width="1" height="1" fill="#8cc08c"/><rect x="11" y="9" width="1" height="1" fill="#fff"/><rect x="12" y="9" width="1" height="1" fill="#fff"/><rect x="13" y="9" width="1" height="1" fill="#fff"/><rect x="14" y="9" width="1" height="1" fill="#8cc08c"/><rect x="15" y="9" width="1" height="1" fill="#008000"/><rect x="0" y="10" width="1" height="1" fill="#008000"/><rect x="1" y="10" width="1" height="1" fill="#8cc08c"/><rect x="2" y="10" width="1" height="1" fill="#fff"/><rect x="3" y="10" width="1" height="1" fill="#8cc08c"/><rect x="4" y="10" width="1" height="1" fill="#008000"/><rect x="5" y="10" width="1" height="1" fill="#8cc08c"/><rect x="6" y="10" width="1" height="1" fill="#008000"/><rect x="7" y="10" width="1" height="1" fill="#fff"/><rect x="8" y="10" width="1" height="1" fill="#008000"/><rect x="9" y="10" width="1" height="1" fill="#fff"/><rect x="10" y="10" width="1" height="1" fill="#008000"/><rect x="11" y="10" width="1" height="1" fill="#8cc08c"/><rect x="12" y="10" width="1" height="1" fill="#fff"/><rect x="13" y="10" width="1" height="1" fill="#fff"/><rect x="14" y="10" width="1" height="1" fill="#008000"/><rect x="15" y="10" width="1" height="1" fill="#8cc08c"/><rect x="0" y="11" width="1" height="1" fill="#8cc08c"/><rect x="1" y="11" width="1" height="1" fill="#008000"/><rect x="2" y="11" width="1" height="1" fill="#fff"/><rect x="3" y="11" width="1" height="1" fill="#008000"/><rect x="4" y="11" width="1" height="1" fill="#8cc08c"/><rect x="5" y="11" width="1" height="1" fill="#008000"/><rect x="6" y="11" width="1" height="1" fill="#fff"/><rect x="7" y="11" width="1" height="1" fill="#fff"/><rect x="8" y="11" width="1" height="1" fill="#fff"/><rect x="9" y="11" width="1" height="1" fill="#008000"/><rect x="10" y="11" width="1" height="1" fill="#fff"/><rect x="11" y="11" width="1" height="1" fill="#008000"/><rect x="12" y="11" width="1" height="1" fill="#8cc08c"/><rect x="13" y="11" width="1" height="1" fill="#fff"/><rect x="14" y="11" width="1" height="1" fill="#8cc08c"/><rect x="15" y="11" width="1" height="1" fill="#008000"/><rect x="0" y="12" width="1" height="1" fill="#008000"/><rect x="1" y="12" width="1" height="1" fill="#8cc08c"/><rect x="2" y="12" width="1" height="1" fill="#fff"/><rect x="3" y="12" width="1" height="1" fill="#8cc08c"/><rect x="4" y="12" width="1" height="1" fill="#008000"/><rect x="5" y="12" width="1" height="1" fill="#fff"/><rect x="6" y="12" width="1" height="1" fill="#fff"/><rect x="7" y="12" width="1" height="1" fill="#fff"/><rect x="8" y="12" width="1" height="1" fill="#fff"/><rect x="9" y="12" width="1" height="1" fill="#fff"/><rect x="10" y="12" width="1" height="1" fill="#008000"/><rect x="11" y="12" width="1" height="1" fill="#8cc08c"/><rect x="12" y="12" width="1" height="1" fill="#008000"/><rect x="13" y="12" width="1" height="1" fill="#fff"/><rect x="14" y="12" width="1" height="1" fill="#008000"/><rect x="15" y="12" width="1" height="1" fill="#8cc08c"/><rect x="0" y="13" width="1" height="1" fill="#8cc08c"/><rect x="1" y="13" width="1" height="1" fill="#008000"/><rect x="2" y="13" width="1" height="1" fill="#fff"/><rect x="3" y="13" width="1" height="1" fill="#fff"/><rect x="4" y="13" width="1" height="1" fill="#fff"/><rect x="5" y="13" width="1" height="1" fill="#fff"/><rect x="6" y="13" width="1" height="1" fill="#fff"/><rect x="7" y="13" width="1" height="1" fill="#fff"/><rect x="8" y="13" width="1" height="1" fill="#fff"/><rect x="9" y="13" width="1" height="1" fill="#fff"/><rect x="10" y="13" width="1" height="1" fill="#fff"/><rect x="11" y="13" width="1" height="1" fill="#fff"/><rect x="12" y="13" width="1" height="1" fill="#fff"/><rect x="13" y="13" width="1" height="1" fill="#fff"/><rect x="14" y="13" width="1" height="1" fill="#8cc08c"/><rect x="15" y="13" width="1" height="1" fill="#008000"/><rect x="0" y="14" width="1" height="1" fill="#008000"/><rect x="1" y="14" width="1" height="1" fill="#8cc08c"/><rect x="2" y="14" width="1" height="1" fill="#008000"/><rect x="3" y="14" width="1" height="1" fill="#8cc08c"/><rect x="4" y="14" width="1" height="1" fill="#008000"/><rect x="5" y="14" width="1" height="1" fill="#8cc08c"/><rect x="6" y="14" width="1" height="1" fill="#008000"/><rect x="7" y="14" width="1" height="1" fill="#8cc08c"/><rect x="8" y="14" width="1" height="1" fill="#008000"/><rect x="9" y="14" width="1" height="1" fill="#8cc08c"/><rect x="10" y="14" width="1" height="1" fill="#008000"/><rect x="11" y="14" width="1" height="1" fill="#8cc08c"/><rect x="12" y="14" width="1" height="1" fill="#008000"/><rect x="13" y="14" width="1" height="1" fill="#8cc08c"/><rect x="14" y="14" width="1" height="1" fill="#008000"/><rect x="15" y="14" width="1" height="1" fill="#8cc08c"/><rect x="0" y="15" width="1" height="1" fill="#8cc08c"/><rect x="1" y="15" width="1" height="1" fill="#008000"/><rect x="2" y="15" width="1" height="1" fill="#8cc08c"/><rect x="3" y="15" width="1" height="1" fill="#008000"/><rect x="4" y="15" width="1" height="1" fill="#8cc08c"/><rect x="5" y="15" width="1" height="1" fill="#008000"/><rect x="6" y="15" width="1" height="1" fill="#8cc08c"/><rect x="7" y="15" width="1" height="1" fill="#008000"/><rect x="8" y="15" width="1" height="1" fill="#8cc08c"/><rect x="9" y="15" width="1" height="1" fill="#008000"/><rect x="10" y="15" width="1" height="1" fill="#8cc08c"/><rect x="11" y="15" width="1" height="1" fill="#008000"/><rect x="12" y="15" width="1" height="1" fill="#8cc08c"/><rect x="13" y="15" width="1" height="1" fill="#008000"/><rect x="14" y="15" width="1" height="1" fill="#8cc08c"/><rect x="15" y="15" width="1" height="1" fill="#008000"/></g></svg>
<svg class="a" style="left:37px;top:68px" width="17" height="17"><rect x="2.5" y="0.5" width="13" height="11" fill="#fff" stroke="#4a5a90"/><rect x="3" y="1" width="12" height="2" fill="#d06080"/><rect x="3" y="3" width="12" height="1" fill="#f0b0c0"/><rect x="8.5" y="5.5" width="5" height="3" fill="#c8d8f0" stroke="#404870"/><path d="M0 1V12H11Z" fill="#3a78d8"/><path d="M1.5 5V10.5H7Z" fill="#1a50b0"/><circle cx="3" cy="9" r="1" fill="#fff"/><rect x="1" y="12" width="15" height="4" fill="#f0a030"/><rect x="1" y="15" width="15" height="1" fill="#a05010"/><path d="M3 12v1.5M5 12v1.5M7 12v1.5M9 12v1.5M11 12v1.5M13 12v1.5" stroke="#fff0c0" stroke-width="1"/></svg>
<svg class="a" style="left:59px;top:75px" width="6" height="4"><path d="M0 0H5L2.5 3Z" fill="#000"/></svg>
<svg class="a" style="left:72px;top:69px" width="15" height="15"><rect x="0.5" y="0.5" width="13" height="13" rx="1" fill="#4868c8" stroke="#28347a"/><rect x="3" y="1" width="8" height="6" fill="#f4f4f4"/><rect x="4" y="9" width="6" height="4" fill="#e8e8e8"/><rect x="4" y="9" width="2" height="3" fill="#202020"/></svg>
<div class="a" style="left:93px;top:68px;width:1px;height:16px;background:#6f9ddd"></div><div class="a" style="left:94px;top:69px;width:1px;height:16px;background:#fff"></div>
<div class="a" style="left:192px;top:68px;width:1px;height:16px;background:#6f9ddd"></div><div class="a" style="left:193px;top:69px;width:1px;height:16px;background:#fff"></div>
<div class="a" style="left:244px;top:68px;width:1px;height:16px;background:#6f9ddd"></div><div class="a" style="left:245px;top:69px;width:1px;height:16px;background:#fff"></div>
<div class="a" style="left:342px;top:68px;width:1px;height:16px;background:#6f9ddd"></div><div class="a" style="left:343px;top:69px;width:1px;height:16px;background:#fff"></div>
<div class="a" style="left:440px;top:68px;width:1px;height:16px;background:#6f9ddd"></div><div class="a" style="left:441px;top:69px;width:1px;height:16px;background:#fff"></div>
<div class="a" style="left:469px;top:68px;width:1px;height:16px;background:#6f9ddd"></div><div class="a" style="left:470px;top:69px;width:1px;height:16px;background:#fff"></div>
<svg class="a" style="left:102px;top:69px" width="11" height="15"><path d="M3 0.5L7 9M8 0.5L4 9" stroke="#8c98a8" stroke-width="1.6" fill="none"/><circle cx="3" cy="11.5" r="2.2" fill="none" stroke="#7c8898" stroke-width="1.5"/><circle cx="8" cy="11.5" r="2.2" fill="none" stroke="#7c8898" stroke-width="1.5"/></svg>
<svg class="a" style="left:123px;top:69px" width="16" height="14"><path d="M0.5 0.5h6l2 2v9h-8z" fill="#f4f6f8" stroke="#8c98a8"/><path d="M6.5 5.5h6l2 2v6h-8z" fill="#f4f6f8" stroke="#7c8898"/><path d="M2 4h4M2 6h4M2 8h4M8 9h5M8 11h5" stroke="#a8b4c4"/></svg>
<svg class="a" style="left:146px;top:69px" width="16" height="14"><rect x="0.5" y="1.5" width="10" height="12" fill="#d0d6de" stroke="#8c98a8"/><rect x="3" y="0" width="5" height="3" fill="#b0bac6"/><path d="M6.5 6.5h6l2 2v5h-8z" fill="#f4f6f8" stroke="#7c8898"/><path d="M8 9h5M8 11h5" stroke="#a8b4c4"/></svg>
<svg class="a" style="left:169px;top:69px" width="15" height="14"><rect x="1.5" y="5.5" width="5" height="8" fill="#e8ecf0" stroke="#8c98a8"/><rect x="8.5" y="5.5" width="5" height="8" fill="#e8ecf0" stroke="#8c98a8"/><rect x="2.5" y="1.5" width="3" height="4" fill="#d0d6de" stroke="#8c98a8"/><rect x="9.5" y="1.5" width="3" height="4" fill="#d0d6de" stroke="#8c98a8"/><rect x="6" y="7" width="3" height="3" fill="#a0aab8"/></svg>
<svg class="a" style="left:199px;top:69px" width="14" height="14"><path d="M3.5 5.5C5 2 10.5 2 11 6.5C11.3 9.5 9 11.5 6.5 12" stroke="#2a68d0" stroke-width="2.4" fill="none"/><path d="M0.5 2V8.5H7Z" fill="#2a68d0"/></svg>
<svg class="a" style="left:222px;top:69px" width="14" height="14"><path d="M10.5 5.5C9 2 3.5 2 3 6.5C2.7 9.5 5 11.5 7.5 12" stroke="#9aa6b4" stroke-width="2.4" fill="none"/><path d="M13.5 2V8.5H7Z" fill="#9aa6b4"/></svg>
<svg class="a" style="left:255px;top:71px" width="7" height="11"><path d="M0.5 0.5V10L6 5.25Z" fill="#10a010" stroke="#087008" stroke-width="0.8"/></svg>
<svg class="a" style="left:276px;top:71px" width="9" height="11"><rect x="0.5" y="0.5" width="2.5" height="9.5" fill="#5a88e0" stroke="#1a40a0"/><rect x="5" y="0.5" width="2.5" height="9.5" fill="#5a88e0" stroke="#1a40a0"/></svg>
<svg class="a" style="left:299px;top:71px" width="10" height="11"><rect x="0.5" y="0.5" width="9" height="9.5" fill="#4a78d8" stroke="#1a40a0"/><rect x="1.5" y="1.5" width="4" height="4" fill="#90b8f0"/></svg>
<svg class="a" style="left:319px;top:67px" width="17" height="17"><path d="M0 1V12H11Z" fill="#3a78d8"/><path d="M1.5 5V10.5H7Z" fill="#1a50b0"/><circle cx="3" cy="9" r="1" fill="#fff"/><path d="M7 11L15 2.5" stroke="#202020" stroke-width="3.2"/><path d="M7 11L15 2.5" stroke="#f0c070" stroke-width="2"/><path d="M14 1.5l2 2" stroke="#e07070" stroke-width="2"/><rect x="1" y="12" width="15" height="4" fill="#f0a030"/><rect x="1" y="15" width="15" height="1" fill="#a05010"/><path d="M3 12v1.5M5 12v1.5M7 12v1.5M9 12v1.5M11 12v1.5M13 12v1.5" stroke="#fff0c0" stroke-width="1"/></svg>
<svg class="a" style="left:348px;top:67px" width="17" height="18"><path d="M1 12l6 4.5h6l-6-4.5z" fill="#e8f0ff" stroke="#1a2a70" stroke-width="1.2"/><path d="M1.5 8.5l5 4h6l-5-4z" fill="#fff" stroke="#2a50b0"/><path d="M1.5 5l5 4h6l-5-4z" fill="#fff" stroke="#3a70d8"/><path d="M1.5 1.5l5 4h6l-5-4z" fill="#dfe8ff" stroke="#3a70d8"/><path d="M2.5 2.5h4M4 4h4" stroke="#3a70d8" stroke-width="1"/><path d="M14 1l2 2.5-2 2.5-2-2.5z M13.5 7.5l2.5 2.5-2.5 2.5-2.5-2.5z M14 13l2 2-2 2-2-2z" fill="#f0a030" stroke="#c07010" stroke-width="0.5"/></svg>
<svg class="a" style="left:371px;top:68px" width="17" height="16"><rect x="0.5" y="6.5" width="12" height="9" fill="#fff" stroke="#3a5aa8"/><path d="M2 10h3M6 10h5M2 12.5h3M6 12.5h5" stroke="#6a8ac8" stroke-width="1.2"/><path d="M3 6L8 1.5L11 4" stroke="#e0a040" stroke-width="2" fill="none"/><ellipse cx="11.5" cy="4" rx="3.5" ry="2.5" fill="#f0a840"/><path d="M14 1L16 0V7L14 6Z" fill="#50a060"/></svg>
<svg class="a" style="left:393px;top:67px" width="18" height="17"><circle cx="3" cy="2.8" r="2.2" fill="#2a60d0" stroke="#102050" stroke-width="0.6"/><circle cx="2.3" cy="2.2" r=".7" fill="#fff"/><path d="M6.5 5L10 2.8V7.2Z" fill="#50a050" stroke="#306030" stroke-width="0.5"/><rect x="12.5" y="0.5" width="4" height="4" fill="#c03020" stroke="#601010" stroke-width="0.6"/><path d="M3.5 9.5h11v6.5h-11z" fill="#f0c060" stroke="#a07020" stroke-width="0.9"/><path d="M3.5 9.5L1 7.5M14.5 9.5L17 7.5M3.5 9.5L6 11.5M14.5 9.5L12 11.5" stroke="#c09030" stroke-width="1.2"/><path d="M4.5 10.5h9" stroke="#fff0c0" stroke-width="1"/></svg>
<svg class="a" style="left:417px;top:69px" width="16" height="14"><path d="M2 13L12 3M4 1L14 12" stroke="#8c98a8" stroke-width="1.8"/><path d="M11 0.5h4v4" stroke="#8c98a8" stroke-width="1.6" fill="none"/><circle cx="3" cy="2.5" r="2" fill="none" stroke="#8c98a8" stroke-width="1.5"/></svg>
<svg class="a" style="left:446px;top:68px" width="16" height="16"><circle cx="8" cy="8" r="7.2" fill="#1a48c0" stroke="#0a2a80" stroke-width="0.8"/><circle cx="8" cy="8" r="5.6" fill="none" stroke="#fff" stroke-width="1.2"/><circle cx="8" cy="8" r="4.8" fill="#2060d8"/><path d="M5.8 6.2C5.8 4.3 10.2 4.3 10.2 6.3C10.2 7.8 8 7.8 8 9.3" stroke="#fff" stroke-width="1.6" fill="none"/><rect x="7.1" y="10.3" width="1.8" height="1.8" fill="#fff"/></svg>
<svg class="a" style="left:41px;top:160px" width="17" height="12" shape-rendering="crispEdges"><rect x="4" y="0" width="5" height="1" fill="#808080"/><rect x="3" y="1" width="1" height="1" fill="#808080"/><rect x="4" y="1" width="1" height="1" fill="#ffff00"/><rect x="5" y="1" width="1" height="1" fill="#f0f0c8"/><rect x="6" y="1" width="1" height="1" fill="#ffff00"/><rect x="7" y="1" width="1" height="1" fill="#f0f0c8"/><rect x="8" y="1" width="1" height="1" fill="#ffff00"/><rect x="9" y="1" width="1" height="1" fill="#808080"/><rect x="2" y="2" width="1" height="1" fill="#808080"/><rect x="3" y="2" width="1" height="1" fill="#f0f0c8"/><rect x="4" y="2" width="1" height="1" fill="#ffff00"/><rect x="5" y="2" width="1" height="1" fill="#f0f0c8"/><rect x="6" y="2" width="1" height="1" fill="#ffff00"/><rect x="7" y="2" width="1" height="1" fill="#f0f0c8"/><rect x="8" y="2" width="1" height="1" fill="#ffff00"/><rect x="9" y="2" width="1" height="1" fill="#f0f0c8"/><rect x="10" y="2" width="6" height="1" fill="#808080"/><rect x="2" y="3" width="1" height="1" fill="#808080"/><rect x="3" y="3" width="1" height="1" fill="#ffff00"/><rect x="4" y="3" width="1" height="1" fill="#f0f0c8"/><rect x="5" y="3" width="1" height="1" fill="#ffff00"/><rect x="6" y="3" width="1" height="1" fill="#f0f0c8"/><rect x="7" y="3" width="1" height="1" fill="#ffff00"/><rect x="8" y="3" width="1" height="1" fill="#f0f0c8"/><rect x="9" y="3" width="1" height="1" fill="#ffff00"/><rect x="10" y="3" width="1" height="1" fill="#f0f0c8"/><rect x="11" y="3" width="1" height="1" fill="#ffff00"/><rect x="12" y="3" width="1" height="1" fill="#f0f0c8"/><rect x="13" y="3" width="1" height="1" fill="#ffff00"/><rect x="14" y="3" width="1" height="1" fill="#f0f0c8"/><rect x="15" y="3" width="1" height="1" fill="#808080"/><rect x="2" y="4" width="1" height="1" fill="#808080"/><rect x="3" y="4" width="1" height="1" fill="#f0f0c8"/><rect x="4" y="4" width="1" height="1" fill="#ffff00"/><rect x="5" y="4" width="1" height="1" fill="#f0f0c8"/><rect x="6" y="4" width="1" height="1" fill="#ffff00"/><rect x="7" y="4" width="1" height="1" fill="#f0f0c8"/><rect x="8" y="4" width="1" height="1" fill="#ffff00"/><rect x="9" y="4" width="1" height="1" fill="#f0f0c8"/><rect x="10" y="4" width="1" height="1" fill="#ffff00"/><rect x="11" y="4" width="1" height="1" fill="#f0f0c8"/><rect x="12" y="4" width="1" height="1" fill="#ffff00"/><rect x="13" y="4" width="1" height="1" fill="#f0f0c8"/><rect x="14" y="4" width="1" height="1" fill="#000"/><rect x="15" y="4" width="1" height="1" fill="#808080"/><rect x="1" y="5" width="12" height="1" fill="#808080"/><rect x="13" y="5" width="2" height="1" fill="#000"/><rect x="15" y="5" width="1" height="1" fill="#808080"/><rect x="1" y="6" width="1" height="1" fill="#808080"/><rect x="2" y="6" width="12" height="1" fill="#fff"/><rect x="14" y="6" width="1" height="1" fill="#000"/><rect x="15" y="6" width="1" height="1" fill="#808080"/><rect x="2" y="7" width="1" height="1" fill="#808080"/><rect x="3" y="7" width="1" height="1" fill="#ffff00"/><rect x="4" y="7" width="1" height="1" fill="#f0f0c8"/><rect x="5" y="7" width="1" height="1" fill="#ffff00"/><rect x="6" y="7" width="1" height="1" fill="#f0f0c8"/><rect x="7" y="7" width="1" height="1" fill="#ffff00"/><rect x="8" y="7" width="1" height="1" fill="#f0f0c8"/><rect x="9" y="7" width="1" height="1" fill="#ffff00"/><rect x="10" y="7" width="1" height="1" fill="#f0f0c8"/><rect x="11" y="7" width="1" height="1" fill="#ffff00"/><rect x="12" y="7" width="1" height="1" fill="#f0f0c8"/><rect x="13" y="7" width="2" height="1" fill="#000"/><rect x="15" y="7" width="1" height="1" fill="#808080"/><rect x="2" y="8" width="1" height="1" fill="#808080"/><rect x="3" y="8" width="1" height="1" fill="#f0f0c8"/><rect x="4" y="8" width="1" height="1" fill="#ffff00"/><rect x="5" y="8" width="1" height="1" fill="#f0f0c8"/><rect x="6" y="8" width="1" height="1" fill="#ffff00"/><rect x="7" y="8" width="1" height="1" fill="#f0f0c8"/><rect x="8" y="8" width="1" height="1" fill="#ffff00"/><rect x="9" y="8" width="1" height="1" fill="#f0f0c8"/><rect x="10" y="8" width="1" height="1" fill="#ffff00"/><rect x="11" y="8" width="1" height="1" fill="#f0f0c8"/><rect x="12" y="8" width="1" height="1" fill="#ffff00"/><rect x="13" y="8" width="1" height="1" fill="#f0f0c8"/><rect x="14" y="8" width="1" height="1" fill="#000"/><rect x="15" y="8" width="1" height="1" fill="#808080"/><rect x="3" y="9" width="1" height="1" fill="#808080"/><rect x="4" y="9" width="1" height="1" fill="#ffff00"/><rect x="5" y="9" width="1" height="1" fill="#f0f0c8"/><rect x="6" y="9" width="1" height="1" fill="#ffff00"/><rect x="7" y="9" width="1" height="1" fill="#f0f0c8"/><rect x="8" y="9" width="1" height="1" fill="#ffff00"/><rect x="9" y="9" width="1" height="1" fill="#f0f0c8"/><rect x="10" y="9" width="1" height="1" fill="#ffff00"/><rect x="11" y="9" width="1" height="1" fill="#f0f0c8"/><rect x="12" y="9" width="1" height="1" fill="#ffff00"/><rect x="13" y="9" width="1" height="1" fill="#f0f0c8"/><rect x="14" y="9" width="1" height="1" fill="#808080"/><rect x="3" y="10" width="1" height="1" fill="#808080"/><rect x="4" y="10" width="1" height="1" fill="#f0f0c8"/><rect x="5" y="10" width="1" height="1" fill="#ffff00"/><rect x="6" y="10" width="1" height="1" fill="#f0f0c8"/><rect x="7" y="10" width="1" height="1" fill="#ffff00"/><rect x="8" y="10" width="1" height="1" fill="#f0f0c8"/><rect x="9" y="10" width="1" height="1" fill="#ffff00"/><rect x="10" y="10" width="1" height="1" fill="#f0f0c8"/><rect x="11" y="10" width="1" height="1" fill="#ffff00"/><rect x="12" y="10" width="1" height="1" fill="#f0f0c8"/><rect x="13" y="10" width="1" height="1" fill="#ffff00"/><rect x="14" y="10" width="1" height="1" fill="#808080"/><rect x="3" y="11" width="12" height="1" fill="#808080"/></svg>
<svg class="a" style="left:41px;top:240px" width="17" height="12" shape-rendering="crispEdges"><rect x="4" y="0" width="5" height="1" fill="#808080"/><rect x="3" y="1" width="1" height="1" fill="#808080"/><rect x="4" y="1" width="1" height="1" fill="#ffff00"/><rect x="5" y="1" width="1" height="1" fill="#f0f0c8"/><rect x="6" y="1" width="1" height="1" fill="#ffff00"/><rect x="7" y="1" width="1" height="1" fill="#f0f0c8"/><rect x="8" y="1" width="1" height="1" fill="#ffff00"/><rect x="9" y="1" width="1" height="1" fill="#808080"/><rect x="2" y="2" width="1" height="1" fill="#808080"/><rect x="3" y="2" width="1" height="1" fill="#f0f0c8"/><rect x="4" y="2" width="1" height="1" fill="#ffff00"/><rect x="5" y="2" width="1" height="1" fill="#f0f0c8"/><rect x="6" y="2" width="1" height="1" fill="#ffff00"/><rect x="7" y="2" width="1" height="1" fill="#f0f0c8"/><rect x="8" y="2" width="1" height="1" fill="#ffff00"/><rect x="9" y="2" width="1" height="1" fill="#f0f0c8"/><rect x="10" y="2" width="6" height="1" fill="#808080"/><rect x="2" y="3" width="1" height="1" fill="#808080"/><rect x="3" y="3" width="1" height="1" fill="#ffff00"/><rect x="4" y="3" width="1" height="1" fill="#f0f0c8"/><rect x="5" y="3" width="1" height="1" fill="#ffff00"/><rect x="6" y="3" width="1" height="1" fill="#f0f0c8"/><rect x="7" y="3" width="1" height="1" fill="#ffff00"/><rect x="8" y="3" width="1" height="1" fill="#f0f0c8"/><rect x="9" y="3" width="1" height="1" fill="#ffff00"/><rect x="10" y="3" width="1" height="1" fill="#f0f0c8"/><rect x="11" y="3" width="1" height="1" fill="#ffff00"/><rect x="12" y="3" width="1" height="1" fill="#f0f0c8"/><rect x="13" y="3" width="1" height="1" fill="#ffff00"/><rect x="14" y="3" width="1" height="1" fill="#f0f0c8"/><rect x="15" y="3" width="1" height="1" fill="#808080"/><rect x="2" y="4" width="1" height="1" fill="#808080"/><rect x="3" y="4" width="1" height="1" fill="#f0f0c8"/><rect x="4" y="4" width="1" height="1" fill="#ffff00"/><rect x="5" y="4" width="1" height="1" fill="#f0f0c8"/><rect x="6" y="4" width="1" height="1" fill="#ffff00"/><rect x="7" y="4" width="1" height="1" fill="#f0f0c8"/><rect x="8" y="4" width="1" height="1" fill="#ffff00"/><rect x="9" y="4" width="1" height="1" fill="#f0f0c8"/><rect x="10" y="4" width="1" height="1" fill="#ffff00"/><rect x="11" y="4" width="1" height="1" fill="#f0f0c8"/><rect x="12" y="4" width="1" height="1" fill="#ffff00"/><rect x="13" y="4" width="1" height="1" fill="#f0f0c8"/><rect x="14" y="4" width="1" height="1" fill="#000"/><rect x="15" y="4" width="1" height="1" fill="#808080"/><rect x="1" y="5" width="12" height="1" fill="#808080"/><rect x="13" y="5" width="2" height="1" fill="#000"/><rect x="15" y="5" width="1" height="1" fill="#808080"/><rect x="1" y="6" width="1" height="1" fill="#808080"/><rect x="2" y="6" width="12" height="1" fill="#fff"/><rect x="14" y="6" width="1" height="1" fill="#000"/><rect x="15" y="6" width="1" height="1" fill="#808080"/><rect x="2" y="7" width="1" height="1" fill="#808080"/><rect x="3" y="7" width="1" height="1" fill="#ffff00"/><rect x="4" y="7" width="1" height="1" fill="#f0f0c8"/><rect x="5" y="7" width="1" height="1" fill="#ffff00"/><rect x="6" y="7" width="1" height="1" fill="#f0f0c8"/><rect x="7" y="7" width="1" height="1" fill="#ffff00"/><rect x="8" y="7" width="1" height="1" fill="#f0f0c8"/><rect x="9" y="7" width="1" height="1" fill="#ffff00"/><rect x="10" y="7" width="1" height="1" fill="#f0f0c8"/><rect x="11" y="7" width="1" height="1" fill="#ffff00"/><rect x="12" y="7" width="1" height="1" fill="#f0f0c8"/><rect x="13" y="7" width="2" height="1" fill="#000"/><rect x="15" y="7" width="1" height="1" fill="#808080"/><rect x="2" y="8" width="1" height="1" fill="#808080"/><rect x="3" y="8" width="1" height="1" fill="#f0f0c8"/><rect x="4" y="8" width="1" height="1" fill="#ffff00"/><rect x="5" y="8" width="1" height="1" fill="#f0f0c8"/><rect x="6" y="8" width="1" height="1" fill="#ffff00"/><rect x="7" y="8" width="1" height="1" fill="#f0f0c8"/><rect x="8" y="8" width="1" height="1" fill="#ffff00"/><rect x="9" y="8" width="1" height="1" fill="#f0f0c8"/><rect x="10" y="8" width="1" height="1" fill="#ffff00"/><rect x="11" y="8" width="1" height="1" fill="#f0f0c8"/><rect x="12" y="8" width="1" height="1" fill="#ffff00"/><rect x="13" y="8" width="1" height="1" fill="#f0f0c8"/><rect x="14" y="8" width="1" height="1" fill="#000"/><rect x="15" y="8" width="1" height="1" fill="#808080"/><rect x="3" y="9" width="1" height="1" fill="#808080"/><rect x="4" y="9" width="1" height="1" fill="#ffff00"/><rect x="5" y="9" width="1" height="1" fill="#f0f0c8"/><rect x="6" y="9" width="1" height="1" fill="#ffff00"/><rect x="7" y="9" width="1" height="1" fill="#f0f0c8"/><rect x="8" y="9" width="1" height="1" fill="#ffff00"/><rect x="9" y="9" width="1" height="1" fill="#f0f0c8"/><rect x="10" y="9" width="1" height="1" fill="#ffff00"/><rect x="11" y="9" width="1" height="1" fill="#f0f0c8"/><rect x="12" y="9" width="1" height="1" fill="#ffff00"/><rect x="13" y="9" width="1" height="1" fill="#f0f0c8"/><rect x="14" y="9" width="1" height="1" fill="#808080"/><rect x="3" y="10" width="1" height="1" fill="#808080"/><rect x="4" y="10" width="1" height="1" fill="#f0f0c8"/><rect x="5" y="10" width="1" height="1" fill="#ffff00"/><rect x="6" y="10" width="1" height="1" fill="#f0f0c8"/><rect x="7" y="10" width="1" height="1" fill="#ffff00"/><rect x="8" y="10" width="1" height="1" fill="#f0f0c8"/><rect x="9" y="10" width="1" height="1" fill="#ffff00"/><rect x="10" y="10" width="1" height="1" fill="#f0f0c8"/><rect x="11" y="10" width="1" height="1" fill="#ffff00"/><rect x="12" y="10" width="1" height="1" fill="#f0f0c8"/><rect x="13" y="10" width="1" height="1" fill="#ffff00"/><rect x="14" y="10" width="1" height="1" fill="#808080"/><rect x="3" y="11" width="12" height="1" fill="#808080"/></svg>
<svg class="a" style="left:61px;top:175px" width="16" height="14" shape-rendering="crispEdges"><rect x="3" y="0" width="9" height="1" fill="#808080"/><rect x="3" y="1" width="1" height="1" fill="#808080"/><rect x="4" y="1" width="7" height="1" fill="#fff"/><rect x="11" y="1" width="1" height="1" fill="#808080"/><rect x="12" y="1" width="1" height="1" fill="#000"/><rect x="0" y="2" width="10" height="1" fill="#000"/><rect x="10" y="2" width="1" height="1" fill="#fff"/><rect x="11" y="2" width="1" height="1" fill="#000"/><rect x="12" y="2" width="1" height="1" fill="#fff"/><rect x="13" y="2" width="1" height="1" fill="#000"/><rect x="0" y="3" width="1" height="1" fill="#000"/><rect x="1" y="3" width="2" height="1" fill="#fff"/><rect x="3" y="3" width="1" height="1" fill="#000"/><rect x="4" y="3" width="2" height="1" fill="#fff"/><rect x="6" y="3" width="1" height="1" fill="#000"/><rect x="7" y="3" width="2" height="1" fill="#fff"/><rect x="9" y="3" width="1" height="1" fill="#000"/><rect x="10" y="3" width="3" height="1" fill="#fff"/><rect x="13" y="3" width="1" height="1" fill="#000"/><rect x="0" y="4" width="10" height="1" fill="#000"/><rect x="10" y="4" width="4" height="1" fill="#fff"/><rect x="14" y="4" width="1" height="1" fill="#000"/><rect x="0" y="5" width="1" height="1" fill="#000"/><rect x="1" y="5" width="2" height="1" fill="#fff"/><rect x="3" y="5" width="1" height="1" fill="#000"/><rect x="4" y="5" width="2" height="1" fill="#fff"/><rect x="6" y="5" width="1" height="1" fill="#000"/><rect x="7" y="5" width="2" height="1" fill="#fff"/><rect x="9" y="5" width="1" height="1" fill="#000"/><rect x="10" y="5" width="4" height="1" fill="#fff"/><rect x="14" y="5" width="1" height="1" fill="#000"/><rect x="0" y="6" width="10" height="1" fill="#000"/><rect x="10" y="6" width="4" height="1" fill="#fff"/><rect x="14" y="6" width="1" height="1" fill="#000"/><rect x="0" y="7" width="1" height="1" fill="#000"/><rect x="1" y="7" width="2" height="1" fill="#fff"/><rect x="3" y="7" width="1" height="1" fill="#000"/><rect x="4" y="7" width="2" height="1" fill="#fff"/><rect x="6" y="7" width="1" height="1" fill="#000"/><rect x="7" y="7" width="2" height="1" fill="#fff"/><rect x="9" y="7" width="1" height="1" fill="#000"/><rect x="10" y="7" width="4" height="1" fill="#fff"/><rect x="14" y="7" width="1" height="1" fill="#000"/><rect x="0" y="8" width="10" height="1" fill="#000"/><rect x="10" y="8" width="4" height="1" fill="#fff"/><rect x="14" y="8" width="1" height="1" fill="#000"/><rect x="0" y="9" width="1" height="1" fill="#000"/><rect x="1" y="9" width="2" height="1" fill="#fff"/><rect x="3" y="9" width="1" height="1" fill="#000"/><rect x="4" y="9" width="2" height="1" fill="#fff"/><rect x="6" y="9" width="1" height="1" fill="#000"/><rect x="7" y="9" width="2" height="1" fill="#fff"/><rect x="9" y="9" width="1" height="1" fill="#000"/><rect x="10" y="9" width="4" height="1" fill="#fff"/><rect x="14" y="9" width="1" height="1" fill="#000"/><rect x="0" y="10" width="10" height="1" fill="#000"/><rect x="10" y="10" width="4" height="1" fill="#fff"/><rect x="14" y="10" width="1" height="1" fill="#000"/><rect x="3" y="11" width="1" height="1" fill="#000"/><rect x="4" y="11" width="10" height="1" fill="#fff"/><rect x="14" y="11" width="1" height="1" fill="#000"/><rect x="3" y="12" width="1" height="1" fill="#000"/><rect x="4" y="12" width="10" height="1" fill="#fff"/><rect x="14" y="12" width="1" height="1" fill="#000"/><rect x="3" y="13" width="12" height="1" fill="#000"/></svg>
<svg class="a" style="left:61px;top:191px" width="16" height="14" shape-rendering="crispEdges"><rect x="3" y="0" width="9" height="1" fill="#808080"/><rect x="3" y="1" width="1" height="1" fill="#808080"/><rect x="4" y="1" width="7" height="1" fill="#fff"/><rect x="11" y="1" width="1" height="1" fill="#808080"/><rect x="12" y="1" width="1" height="1" fill="#000"/><rect x="0" y="2" width="10" height="1" fill="#000"/><rect x="10" y="2" width="1" height="1" fill="#fff"/><rect x="11" y="2" width="1" height="1" fill="#000"/><rect x="12" y="2" width="1" height="1" fill="#fff"/><rect x="13" y="2" width="1" height="1" fill="#000"/><rect x="0" y="3" width="1" height="1" fill="#000"/><rect x="1" y="3" width="2" height="1" fill="#fff"/><rect x="3" y="3" width="1" height="1" fill="#000"/><rect x="4" y="3" width="2" height="1" fill="#fff"/><rect x="6" y="3" width="1" height="1" fill="#000"/><rect x="7" y="3" width="2" height="1" fill="#fff"/><rect x="9" y="3" width="1" height="1" fill="#000"/><rect x="10" y="3" width="3" height="1" fill="#fff"/><rect x="13" y="3" width="1" height="1" fill="#000"/><rect x="0" y="4" width="10" height="1" fill="#000"/><rect x="10" y="4" width="4" height="1" fill="#fff"/><rect x="14" y="4" width="1" height="1" fill="#000"/><rect x="0" y="5" width="1" height="1" fill="#000"/><rect x="1" y="5" width="2" height="1" fill="#fff"/><rect x="3" y="5" width="1" height="1" fill="#000"/><rect x="4" y="5" width="2" height="1" fill="#fff"/><rect x="6" y="5" width="1" height="1" fill="#000"/><rect x="7" y="5" width="2" height="1" fill="#fff"/><rect x="9" y="5" width="1" height="1" fill="#000"/><rect x="10" y="5" width="4" height="1" fill="#fff"/><rect x="14" y="5" width="1" height="1" fill="#000"/><rect x="0" y="6" width="10" height="1" fill="#000"/><rect x="10" y="6" width="4" height="1" fill="#fff"/><rect x="14" y="6" width="1" height="1" fill="#000"/><rect x="0" y="7" width="1" height="1" fill="#000"/><rect x="1" y="7" width="2" height="1" fill="#fff"/><rect x="3" y="7" width="1" height="1" fill="#000"/><rect x="4" y="7" width="2" height="1" fill="#fff"/><rect x="6" y="7" width="1" height="1" fill="#000"/><rect x="7" y="7" width="2" height="1" fill="#fff"/><rect x="9" y="7" width="1" height="1" fill="#000"/><rect x="10" y="7" width="4" height="1" fill="#fff"/><rect x="14" y="7" width="1" height="1" fill="#000"/><rect x="0" y="8" width="10" height="1" fill="#000"/><rect x="10" y="8" width="4" height="1" fill="#fff"/><rect x="14" y="8" width="1" height="1" fill="#000"/><rect x="0" y="9" width="1" height="1" fill="#000"/><rect x="1" y="9" width="2" height="1" fill="#fff"/><rect x="3" y="9" width="1" height="1" fill="#000"/><rect x="4" y="9" width="2" height="1" fill="#fff"/><rect x="6" y="9" width="1" height="1" fill="#000"/><rect x="7" y="9" width="2" height="1" fill="#fff"/><rect x="9" y="9" width="1" height="1" fill="#000"/><rect x="10" y="9" width="4" height="1" fill="#fff"/><rect x="14" y="9" width="1" height="1" fill="#000"/><rect x="0" y="10" width="10" height="1" fill="#000"/><rect x="10" y="10" width="4" height="1" fill="#fff"/><rect x="14" y="10" width="1" height="1" fill="#000"/><rect x="3" y="11" width="1" height="1" fill="#000"/><rect x="4" y="11" width="10" height="1" fill="#fff"/><rect x="14" y="11" width="1" height="1" fill="#000"/><rect x="3" y="12" width="1" height="1" fill="#000"/><rect x="4" y="12" width="10" height="1" fill="#fff"/><rect x="14" y="12" width="1" height="1" fill="#000"/><rect x="3" y="13" width="12" height="1" fill="#000"/></svg>
<svg class="a" style="left:61px;top:207px" width="16" height="14" shape-rendering="crispEdges"><rect x="3" y="0" width="9" height="1" fill="#808080"/><rect x="3" y="1" width="1" height="1" fill="#808080"/><rect x="4" y="1" width="7" height="1" fill="#fff"/><rect x="11" y="1" width="1" height="1" fill="#808080"/><rect x="12" y="1" width="1" height="1" fill="#000"/><rect x="0" y="2" width="10" height="1" fill="#000"/><rect x="10" y="2" width="1" height="1" fill="#fff"/><rect x="11" y="2" width="1" height="1" fill="#000"/><rect x="12" y="2" width="1" height="1" fill="#fff"/><rect x="13" y="2" width="1" height="1" fill="#000"/><rect x="0" y="3" width="1" height="1" fill="#000"/><rect x="1" y="3" width="2" height="1" fill="#fff"/><rect x="3" y="3" width="1" height="1" fill="#000"/><rect x="4" y="3" width="2" height="1" fill="#fff"/><rect x="6" y="3" width="1" height="1" fill="#000"/><rect x="7" y="3" width="2" height="1" fill="#fff"/><rect x="9" y="3" width="1" height="1" fill="#000"/><rect x="10" y="3" width="3" height="1" fill="#fff"/><rect x="13" y="3" width="1" height="1" fill="#000"/><rect x="0" y="4" width="10" height="1" fill="#000"/><rect x="10" y="4" width="4" height="1" fill="#fff"/><rect x="14" y="4" width="1" height="1" fill="#000"/><rect x="0" y="5" width="1" height="1" fill="#000"/><rect x="1" y="5" width="2" height="1" fill="#fff"/><rect x="3" y="5" width="1" height="1" fill="#000"/><rect x="4" y="5" width="2" height="1" fill="#fff"/><rect x="6" y="5" width="1" height="1" fill="#000"/><rect x="7" y="5" width="2" height="1" fill="#fff"/><rect x="9" y="5" width="1" height="1" fill="#000"/><rect x="10" y="5" width="4" height="1" fill="#fff"/><rect x="14" y="5" width="1" height="1" fill="#000"/><rect x="0" y="6" width="10" height="1" fill="#000"/><rect x="10" y="6" width="4" height="1" fill="#fff"/><rect x="14" y="6" width="1" height="1" fill="#000"/><rect x="0" y="7" width="1" height="1" fill="#000"/><rect x="1" y="7" width="2" height="1" fill="#fff"/><rect x="3" y="7" width="1" height="1" fill="#000"/><rect x="4" y="7" width="2" height="1" fill="#fff"/><rect x="6" y="7" width="1" height="1" fill="#000"/><rect x="7" y="7" width="2" height="1" fill="#fff"/><rect x="9" y="7" width="1" height="1" fill="#000"/><rect x="10" y="7" width="4" height="1" fill="#fff"/><rect x="14" y="7" width="1" height="1" fill="#000"/><rect x="0" y="8" width="10" height="1" fill="#000"/><rect x="10" y="8" width="4" height="1" fill="#fff"/><rect x="14" y="8" width="1" height="1" fill="#000"/><rect x="0" y="9" width="1" height="1" fill="#000"/><rect x="1" y="9" width="2" height="1" fill="#fff"/><rect x="3" y="9" width="1" height="1" fill="#000"/><rect x="4" y="9" width="2" height="1" fill="#fff"/><rect x="6" y="9" width="1" height="1" fill="#000"/><rect x="7" y="9" width="2" height="1" fill="#fff"/><rect x="9" y="9" width="1" height="1" fill="#000"/><rect x="10" y="9" width="4" height="1" fill="#fff"/><rect x="14" y="9" width="1" height="1" fill="#000"/><rect x="0" y="10" width="10" height="1" fill="#000"/><rect x="10" y="10" width="4" height="1" fill="#fff"/><rect x="14" y="10" width="1" height="1" fill="#000"/><rect x="3" y="11" width="1" height="1" fill="#000"/><rect x="4" y="11" width="10" height="1" fill="#fff"/><rect x="14" y="11" width="1" height="1" fill="#000"/><rect x="3" y="12" width="1" height="1" fill="#000"/><rect x="4" y="12" width="10" height="1" fill="#fff"/><rect x="14" y="12" width="1" height="1" fill="#000"/><rect x="3" y="13" width="12" height="1" fill="#000"/></svg>
<svg class="a" style="left:56px;top:222px" width="19" height="15" shape-rendering="crispEdges"><rect x="7" y="0" width="8" height="1" fill="#000"/><rect x="7" y="1" width="1" height="1" fill="#000"/><rect x="8" y="1" width="6" height="1" fill="#fff"/><rect x="14" y="1" width="2" height="1" fill="#000"/><rect x="7" y="2" width="1" height="1" fill="#000"/><rect x="8" y="2" width="6" height="1" fill="#fff"/><rect x="14" y="2" width="1" height="1" fill="#000"/><rect x="15" y="2" width="1" height="1" fill="#fff"/><rect x="16" y="2" width="1" height="1" fill="#000"/><rect x="7" y="3" width="1" height="1" fill="#000"/><rect x="8" y="3" width="6" height="1" fill="#fff"/><rect x="14" y="3" width="1" height="1" fill="#000"/><rect x="15" y="3" width="2" height="1" fill="#fff"/><rect x="17" y="3" width="1" height="1" fill="#000"/><rect x="4" y="4" width="1" height="1" fill="#008000"/><rect x="5" y="4" width="1" height="1" fill="#9ccc9c"/><rect x="6" y="4" width="1" height="1" fill="#008000"/><rect x="7" y="4" width="1" height="1" fill="#000"/><rect x="8" y="4" width="1" height="1" fill="#fff"/><rect x="9" y="4" width="1" height="1" fill="#9ccc9c"/><rect x="10" y="4" width="1" height="1" fill="#008000"/><rect x="11" y="4" width="1" height="1" fill="#9ccc9c"/><rect x="12" y="4" width="1" height="1" fill="#008000"/><rect x="13" y="4" width="4" height="1" fill="#fff"/><rect x="17" y="4" width="1" height="1" fill="#000"/><rect x="4" y="5" width="1" height="1" fill="#9ccc9c"/><rect x="5" y="5" width="1" height="1" fill="#008000"/><rect x="6" y="5" width="1" height="1" fill="#9ccc9c"/><rect x="7" y="5" width="1" height="1" fill="#008000"/><rect x="8" y="5" width="1" height="1" fill="#9ccc9c"/><rect x="9" y="5" width="1" height="1" fill="#008000"/><rect x="10" y="5" width="1" height="1" fill="#9ccc9c"/><rect x="11" y="5" width="1" height="1" fill="#008000"/><rect x="12" y="5" width="5" height="1" fill="#fff"/><rect x="17" y="5" width="1" height="1" fill="#000"/><rect x="5" y="6" width="1" height="1" fill="#9ccc9c"/><rect x="6" y="6" width="1" height="1" fill="#008000"/><rect x="7" y="6" width="1" height="1" fill="#9ccc9c"/><rect x="8" y="6" width="1" height="1" fill="#008000"/><rect x="9" y="6" width="1" height="1" fill="#9ccc9c"/><rect x="10" y="6" width="1" height="1" fill="#008000"/><rect x="11" y="6" width="6" height="1" fill="#fff"/><rect x="17" y="6" width="1" height="1" fill="#000"/><rect x="6" y="7" width="1" height="1" fill="#9ccc9c"/><rect x="7" y="7" width="1" height="1" fill="#008000"/><rect x="8" y="7" width="1" height="1" fill="#9ccc9c"/><rect x="9" y="7" width="1" height="1" fill="#008000"/><rect x="10" y="7" width="7" height="1" fill="#fff"/><rect x="17" y="7" width="1" height="1" fill="#000"/><rect x="5" y="8" width="1" height="1" fill="#9ccc9c"/><rect x="6" y="8" width="1" height="1" fill="#008000"/><rect x="7" y="8" width="1" height="1" fill="#9ccc9c"/><rect x="8" y="8" width="1" height="1" fill="#008000"/><rect x="9" y="8" width="1" height="1" fill="#9ccc9c"/><rect x="10" y="8" width="1" height="1" fill="#008000"/><rect x="11" y="8" width="6" height="1" fill="#fff"/><rect x="17" y="8" width="1" height="1" fill="#000"/><rect x="4" y="9" width="1" height="1" fill="#9ccc9c"/><rect x="5" y="9" width="1" height="1" fill="#008000"/><rect x="6" y="9" width="1" height="1" fill="#9ccc9c"/><rect x="7" y="9" width="1" height="1" fill="#008000"/><rect x="8" y="9" width="1" height="1" fill="#9ccc9c"/><rect x="9" y="9" width="1" height="1" fill="#008000"/><rect x="10" y="9" width="1" height="1" fill="#9ccc9c"/><rect x="11" y="9" width="1" height="1" fill="#008000"/><rect x="12" y="9" width="5" height="1" fill="#fff"/><rect x="17" y="9" width="1" height="1" fill="#000"/><rect x="4" y="10" width="1" height="1" fill="#008000"/><rect x="5" y="10" width="1" height="1" fill="#9ccc9c"/><rect x="6" y="10" width="1" height="1" fill="#008000"/><rect x="7" y="10" width="1" height="1" fill="#000"/><rect x="8" y="10" width="1" height="1" fill="#fff"/><rect x="9" y="10" width="1" height="1" fill="#9ccc9c"/><rect x="10" y="10" width="1" height="1" fill="#008000"/><rect x="11" y="10" width="1" height="1" fill="#9ccc9c"/><rect x="12" y="10" width="1" height="1" fill="#008000"/><rect x="13" y="10" width="4" height="1" fill="#fff"/><rect x="17" y="10" width="1" height="1" fill="#000"/><rect x="4" y="11" width="1" height="1" fill="#9ccc9c"/><rect x="5" y="11" width="1" height="1" fill="#008000"/><rect x="7" y="11" width="1" height="1" fill="#000"/><rect x="8" y="11" width="2" height="1" fill="#fff"/><rect x="10" y="11" width="1" height="1" fill="#9ccc9c"/><rect x="11" y="11" width="1" height="1" fill="#008000"/><rect x="12" y="11" width="1" height="1" fill="#9ccc9c"/><rect x="13" y="11" width="4" height="1" fill="#fff"/><rect x="17" y="11" width="1" height="1" fill="#000"/><rect x="7" y="12" width="1" height="1" fill="#000"/><rect x="8" y="12" width="9" height="1" fill="#fff"/><rect x="17" y="12" width="1" height="1" fill="#000"/><rect x="7" y="13" width="1" height="1" fill="#000"/><rect x="8" y="13" width="9" height="1" fill="#fff"/><rect x="17" y="13" width="1" height="1" fill="#000"/><rect x="7" y="14" width="11" height="1" fill="#000"/></svg>
<svg class="a" style="left:56px;top:250px" width="21" height="19" shape-rendering="crispEdges"><rect x="10" y="5" width="1" height="1" fill="#000"/><rect x="11" y="5" width="1" height="1" fill="#ffff00"/><rect x="12" y="5" width="1" height="1" fill="#000"/><rect x="13" y="5" width="1" height="1" fill="#ffff00"/><rect x="15" y="5" width="1" height="1" fill="#ff00ff"/><rect x="16" y="5" width="1" height="1" fill="#000"/><rect x="17" y="5" width="1" height="1" fill="#ff00ff"/><rect x="18" y="5" width="1" height="1" fill="#000"/><rect x="10" y="6" width="1" height="1" fill="#ffff00"/><rect x="11" y="6" width="1" height="1" fill="#000"/><rect x="12" y="6" width="1" height="1" fill="#ffff00"/><rect x="13" y="6" width="1" height="1" fill="#000"/><rect x="15" y="6" width="1" height="1" fill="#000"/><rect x="16" y="6" width="1" height="1" fill="#ff00ff"/><rect x="17" y="6" width="1" height="1" fill="#000"/><rect x="18" y="6" width="1" height="1" fill="#ff00ff"/><rect x="10" y="7" width="1" height="1" fill="#000"/><rect x="11" y="7" width="1" height="1" fill="#ffff00"/><rect x="12" y="7" width="1" height="1" fill="#000"/><rect x="13" y="7" width="1" height="1" fill="#ffff00"/><rect x="15" y="7" width="1" height="1" fill="#ff00ff"/><rect x="16" y="7" width="1" height="1" fill="#000"/><rect x="17" y="7" width="1" height="1" fill="#ff00ff"/><rect x="18" y="7" width="1" height="1" fill="#000"/><rect x="10" y="8" width="1" height="1" fill="#ffff00"/><rect x="11" y="8" width="1" height="1" fill="#000"/><rect x="12" y="8" width="1" height="1" fill="#ffff00"/><rect x="13" y="8" width="1" height="1" fill="#000"/><rect x="15" y="8" width="1" height="1" fill="#000"/><rect x="16" y="8" width="1" height="1" fill="#ff00ff"/><rect x="17" y="8" width="1" height="1" fill="#000"/><rect x="18" y="8" width="1" height="1" fill="#ff00ff"/><rect x="10" y="9" width="1" height="1" fill="#000"/><rect x="11" y="9" width="1" height="1" fill="#ffff00"/><rect x="12" y="9" width="1" height="1" fill="#000"/><rect x="13" y="9" width="1" height="1" fill="#ffff00"/><rect x="15" y="9" width="1" height="1" fill="#ff00ff"/><rect x="16" y="9" width="1" height="1" fill="#000"/><rect x="17" y="9" width="1" height="1" fill="#ff00ff"/><rect x="18" y="9" width="1" height="1" fill="#000"/><rect x="9" y="10" width="1" height="1" fill="#000"/><rect x="10" y="10" width="1" height="1" fill="#ffff00"/><rect x="11" y="10" width="1" height="1" fill="#000"/><rect x="12" y="10" width="1" height="1" fill="#ffff00"/><rect x="13" y="10" width="1" height="1" fill="#000"/><rect x="15" y="10" width="3" height="1" fill="#000"/><rect x="18" y="10" width="1" height="1" fill="#ff00ff"/><rect x="4" y="11" width="1" height="1" fill="#000"/><rect x="5" y="11" width="1" height="1" fill="#ff00ff"/><rect x="6" y="11" width="1" height="1" fill="#000"/><rect x="7" y="11" width="1" height="1" fill="#ff00ff"/><rect x="8" y="11" width="1" height="1" fill="#000"/><rect x="14" y="11" width="2" height="1" fill="#000"/><rect x="4" y="12" width="1" height="1" fill="#ff00ff"/><rect x="5" y="12" width="1" height="1" fill="#000"/><rect x="6" y="12" width="1" height="1" fill="#ff00ff"/><rect x="7" y="12" width="1" height="1" fill="#000"/><rect x="9" y="12" width="1" height="1" fill="#000"/><rect x="10" y="12" width="1" height="1" fill="#00d000"/><rect x="11" y="12" width="1" height="1" fill="#000"/><rect x="12" y="12" width="1" height="1" fill="#00d000"/><rect x="13" y="12" width="1" height="1" fill="#000"/><rect x="15" y="12" width="1" height="1" fill="#000"/><rect x="4" y="13" width="1" height="1" fill="#000"/><rect x="5" y="13" width="1" height="1" fill="#ff00ff"/><rect x="6" y="13" width="1" height="1" fill="#000"/><rect x="7" y="13" width="1" height="1" fill="#ff00ff"/><rect x="9" y="13" width="1" height="1" fill="#00d000"/><rect x="10" y="13" width="1" height="1" fill="#000"/><rect x="11" y="13" width="1" height="1" fill="#00d000"/><rect x="12" y="13" width="1" height="1" fill="#000"/><rect x="13" y="13" width="1" height="1" fill="#00d000"/><rect x="16" y="13" width="1" height="1" fill="#000"/><rect x="4" y="14" width="1" height="1" fill="#ff00ff"/><rect x="5" y="14" width="1" height="1" fill="#000"/><rect x="6" y="14" width="1" height="1" fill="#ff00ff"/><rect x="7" y="14" width="1" height="1" fill="#000"/><rect x="9" y="14" width="1" height="1" fill="#000"/><rect x="10" y="14" width="1" height="1" fill="#00d000"/><rect x="11" y="14" width="1" height="1" fill="#000"/><rect x="12" y="14" width="1" height="1" fill="#00d000"/><rect x="13" y="14" width="1" height="1" fill="#000"/><rect x="14" y="14" width="1" height="1" fill="#00ffff"/><rect x="15" y="14" width="1" height="1" fill="#000"/><rect x="16" y="14" width="1" height="1" fill="#00ffff"/><rect x="17" y="14" width="1" height="1" fill="#000"/><rect x="18" y="14" width="1" height="1" fill="#00ffff"/><rect x="19" y="14" width="1" height="1" fill="#000"/><rect x="4" y="15" width="1" height="1" fill="#000"/><rect x="5" y="15" width="1" height="1" fill="#ff00ff"/><rect x="6" y="15" width="1" height="1" fill="#000"/><rect x="7" y="15" width="1" height="1" fill="#ff00ff"/><rect x="9" y="15" width="1" height="1" fill="#00d000"/><rect x="10" y="15" width="1" height="1" fill="#000"/><rect x="11" y="15" width="1" height="1" fill="#00d000"/><rect x="12" y="15" width="1" height="1" fill="#000"/><rect x="13" y="15" width="1" height="1" fill="#00d000"/><rect x="14" y="15" width="1" height="1" fill="#000"/><rect x="15" y="15" width="1" height="1" fill="#00ffff"/><rect x="16" y="15" width="1" height="1" fill="#000"/><rect x="17" y="15" width="1" height="1" fill="#00ffff"/><rect x="18" y="15" width="1" height="1" fill="#000"/><rect x="19" y="15" width="1" height="1" fill="#00ffff"/><rect x="4" y="16" width="1" height="1" fill="#ff00ff"/><rect x="5" y="16" width="1" height="1" fill="#000"/><rect x="6" y="16" width="1" height="1" fill="#ff00ff"/><rect x="7" y="16" width="1" height="1" fill="#000"/><rect x="14" y="16" width="1" height="1" fill="#00ffff"/><rect x="15" y="16" width="1" height="1" fill="#000"/><rect x="16" y="16" width="1" height="1" fill="#00ffff"/><rect x="17" y="16" width="1" height="1" fill="#000"/><rect x="18" y="16" width="1" height="1" fill="#00ffff"/><rect x="19" y="16" width="1" height="1" fill="#000"/><rect x="4" y="17" width="1" height="1" fill="#000"/><rect x="5" y="17" width="1" height="1" fill="#ff00ff"/><rect x="6" y="17" width="1" height="1" fill="#000"/><rect x="7" y="17" width="1" height="1" fill="#ff00ff"/><rect x="14" y="17" width="1" height="1" fill="#000"/><rect x="15" y="17" width="1" height="1" fill="#00ffff"/><rect x="16" y="17" width="1" height="1" fill="#000"/><rect x="17" y="17" width="1" height="1" fill="#00ffff"/><rect x="18" y="17" width="1" height="1" fill="#000"/><rect x="19" y="17" width="1" height="1" fill="#00ffff"/></svg>
<svg class="a" style="left:20px;top:142px" width="20" height="15" shape-rendering="crispEdges"><rect x="14" y="0" width="1" height="1" fill="#000"/><rect x="15" y="0" width="1" height="1" fill="#00d000"/><rect x="16" y="0" width="1" height="1" fill="#000"/><rect x="4" y="1" width="2" height="1" fill="#000"/><rect x="13" y="1" width="1" height="1" fill="#000"/><rect x="14" y="1" width="2" height="1" fill="#00d000"/><rect x="16" y="1" width="1" height="1" fill="#000"/><rect x="4" y="2" width="1" height="1" fill="#000"/><rect x="5" y="2" width="1" height="1" fill="#00e8e8"/><rect x="6" y="2" width="3" height="1" fill="#000"/><rect x="13" y="2" width="3" height="1" fill="#000"/><rect x="4" y="3" width="1" height="1" fill="#000"/><rect x="5" y="3" width="1" height="1" fill="#fff"/><rect x="6" y="3" width="2" height="1" fill="#00e8e8"/><rect x="8" y="3" width="1" height="1" fill="#000"/><rect x="10" y="3" width="1" height="1" fill="#000"/><rect x="11" y="3" width="2" height="1" fill="#f0f000"/><rect x="13" y="3" width="1" height="1" fill="#000"/><rect x="4" y="4" width="1" height="1" fill="#000"/><rect x="5" y="4" width="1" height="1" fill="#fff"/><rect x="6" y="4" width="1" height="1" fill="#000"/><rect x="7" y="4" width="1" height="1" fill="#00e8e8"/><rect x="8" y="4" width="3" height="1" fill="#000"/><rect x="11" y="4" width="2" height="1" fill="#f0f000"/><rect x="13" y="4" width="1" height="1" fill="#000"/><rect x="4" y="5" width="2" height="1" fill="#000"/><rect x="6" y="5" width="1" height="1" fill="#fff"/><rect x="7" y="5" width="1" height="1" fill="#00e8e8"/><rect x="8" y="5" width="2" height="1" fill="#000"/><rect x="10" y="5" width="2" height="1" fill="#fff"/><rect x="12" y="5" width="2" height="1" fill="#000"/><rect x="14" y="5" width="1" height="1" fill="#ff00ff"/><rect x="15" y="5" width="1" height="1" fill="#000"/><rect x="4" y="6" width="3" height="1" fill="#000"/><rect x="7" y="6" width="1" height="1" fill="#fff"/><rect x="8" y="6" width="2" height="1" fill="#00e8e8"/><rect x="10" y="6" width="2" height="1" fill="#000"/><rect x="13" y="6" width="1" height="1" fill="#000"/><rect x="14" y="6" width="1" height="1" fill="#ff00ff"/><rect x="15" y="6" width="1" height="1" fill="#000"/><rect x="2" y="7" width="1" height="1" fill="#000"/><rect x="5" y="7" width="2" height="1" fill="#000"/><rect x="7" y="7" width="2" height="1" fill="#fff"/><rect x="9" y="7" width="2" height="1" fill="#000"/><rect x="13" y="7" width="1" height="1" fill="#000"/><rect x="14" y="7" width="1" height="1" fill="#ff00ff"/><rect x="15" y="7" width="1" height="1" fill="#000"/><rect x="2" y="8" width="2" height="1" fill="#000"/><rect x="6" y="8" width="1" height="1" fill="#000"/><rect x="7" y="8" width="3" height="1" fill="#fff"/><rect x="10" y="8" width="1" height="1" fill="#000"/><rect x="11" y="8" width="1" height="1" fill="#00e8e8"/><rect x="12" y="8" width="3" height="1" fill="#000"/><rect x="2" y="9" width="1" height="1" fill="#000"/><rect x="6" y="9" width="2" height="1" fill="#000"/><rect x="8" y="9" width="2" height="1" fill="#fff"/><rect x="10" y="9" width="1" height="1" fill="#000"/><rect x="11" y="9" width="2" height="1" fill="#00e8e8"/><rect x="13" y="9" width="4" height="1" fill="#000"/><rect x="3" y="10" width="1" height="1" fill="#000"/><rect x="4" y="10" width="2" height="1" fill="#fff"/><rect x="6" y="10" width="4" height="1" fill="#000"/><rect x="10" y="10" width="2" height="1" fill="#fff"/><rect x="12" y="10" width="2" height="1" fill="#00e8e8"/><rect x="14" y="10" width="3" height="1" fill="#000"/><rect x="4" y="11" width="1" height="1" fill="#000"/><rect x="9" y="11" width="2" height="1" fill="#000"/><rect x="13" y="11" width="3" height="1" fill="#000"/><rect x="5" y="12" width="2" height="1" fill="#000"/><rect x="10" y="12" width="4" height="1" fill="#000"/><rect x="7" y="13" width="2" height="1" fill="#000"/><rect x="10" y="13" width="2" height="1" fill="#000"/><rect x="9" y="14" width="2" height="1" fill="#000"/></svg>
<svg class="a" style="left:10px;top:119px" width="15" height="13"><rect x="0.5" y="0.5" width="14" height="12" fill="#fff" stroke="#3a4a88"/><rect x="1" y="1" width="13" height="2" fill="#6a98e8"/><rect x="1" y="3" width="2" height="9" fill="#d0d8e8"/><path d="M5 5.5h3M10 5.5h3M5 8h3M10 8h3M5 10.5h3M10 10.5h3" stroke="#f09030"/><path d="M5 8h3M5 10.5h3" stroke="#7090c0"/></svg>
<svg class="a" style="left:32px;top:118px" width="16" height="14"><rect x="0.5" y="0.5" width="15" height="13" fill="#fff" stroke="#3a4a88"/><rect x="1" y="1" width="14" height="2" fill="#6a98e8"/><path d="M3 5.5h3M3 9.5h3" stroke="#505050"/><rect x="8.5" y="4.5" width="5" height="3" fill="#fff" stroke="#403830"/><rect x="8.5" y="8.5" width="5" height="3" fill="#fff" stroke="#403830"/></svg>
<div class="a" style="left:54px;top:118px;width:1px;height:15px;background:#6f9ddd"></div><div class="a" style="left:55px;top:119px;width:1px;height:15px;background:#fff"></div>
<svg class="a" style="left:61px;top:119px" width="16" height="13"><path d="M0.5 1.5h5l1 2h7v9h-13z" fill="#e8b060" stroke="#505060"/><rect x="1" y="4" width="13" height="8" fill="url(#fg)"/><defs><linearGradient id="fg" x1="0" y1="0" x2="1" y2="1"><stop offset="0" stop-color="#fff0c0"/><stop offset="1" stop-color="#c07020"/></linearGradient></defs><path d="M0.5 3.5h14v9h-14z" fill="none" stroke="#404050"/></svg>
<!-- /ICONS -->
</body></html>
